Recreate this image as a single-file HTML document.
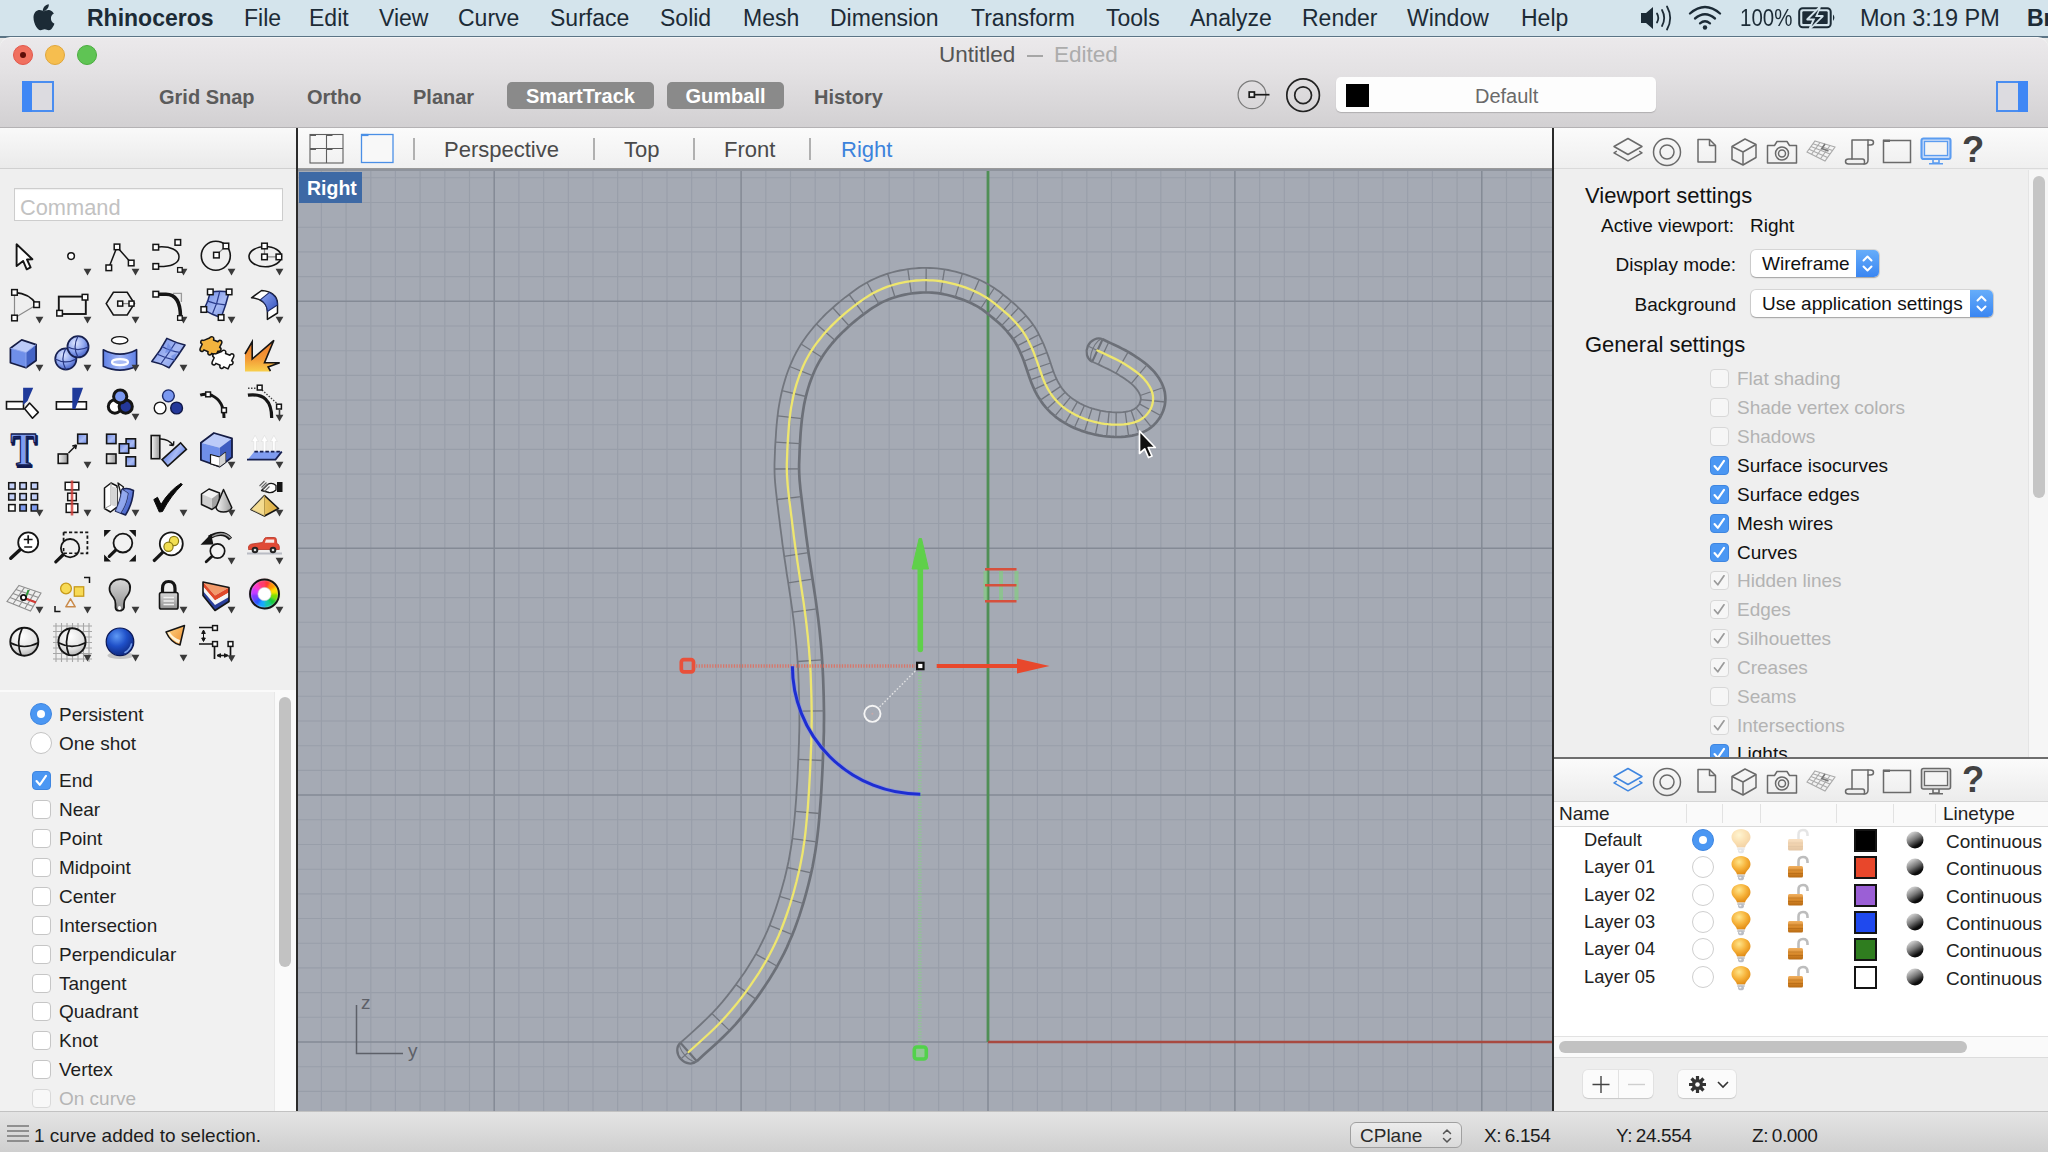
<!DOCTYPE html>
<html><head><meta charset="utf-8"><title>Rhinoceros</title>
<style>
*{box-sizing:border-box;margin:0;padding:0}
html,body{width:2048px;height:1152px;overflow:hidden;background:#e9e9e9;font-family:"Liberation Sans",sans-serif;color:#222}
.a{position:absolute}
.t{position:absolute;white-space:nowrap;line-height:1;font-size:19px;color:#1e1e1e}
.m{font-size:23px;color:#1c2b36;top:7px}
.b{font-weight:bold}
svg{position:absolute;overflow:visible}
#menubar{left:0;top:0;width:2048px;height:37px;background:#d4e4ec}
#win{left:0;top:36px;width:2048px;height:1116px;background:#ececec;border-radius:9px 9px 0 0;overflow:hidden}
#tb{left:0;top:0;width:2048px;height:92px;background:linear-gradient(#e9e7e9 0%,#e3e1e3 40%,#d3d1d3 100%);border-bottom:1px solid #b9b7b9}
.tbt{font-size:20px;font-weight:bold;color:#5b5b5b;top:86.500px}
.pill{position:absolute;top:82px;height:27px;border-radius:5px;background:#8a8a8a;color:#fff;font-size:20px;font-weight:bold;line-height:29px;text-align:center}
</style></head><body>
<div id="menubar" class="a">
<svg style="left:28.500px;top:2.500px" width="27.600" height="29.900" viewBox="0 0 24 26"><path fill="#1c2b36" d="M17.2 1c.2 1.6-.5 3.100-1.400 4.200-.9 1.100-2.400 2-3.800 1.900-.2-1.500.6-3.100 1.400-4.100C14.300 1.900 15.900 1.100 17.200 1zM21.600 9.200c-.3.200-2.500 1.500-2.500 4.300 0 3.300 2.900 4.400 3 4.500 0 .1-.5 1.600-1.500 3.100-.9 1.400-1.900 2.700-3.400 2.700-1.500 0-1.900-.9-3.600-.9-1.700 0-2.200.9-3.600.9-1.500 0-2.500-1.300-3.600-2.900C5 18.900 3.900 15.600 3.900 12.500c0-4.200 2.800-6.400 5.400-6.400 1.500 0 2.700 1 3.600 1 .9 0 2.300-1 4-1 .6 0 3 .1 4.700 3.100z"/></svg>
<div class="t m b" style="left:87px">Rhinoceros</div>
<div class="t m" style="left:244px">File</div>
<div class="t m" style="left:309px">Edit</div>
<div class="t m" style="left:379px">View</div>
<div class="t m" style="left:458px">Curve</div>
<div class="t m" style="left:550px">Surface</div>
<div class="t m" style="left:660px">Solid</div>
<div class="t m" style="left:743px">Mesh</div>
<div class="t m" style="left:830px">Dimension</div>
<div class="t m" style="left:971px">Transform</div>
<div class="t m" style="left:1106px">Tools</div>
<div class="t m" style="left:1190px">Analyze</div>
<div class="t m" style="left:1302px">Render</div>
<div class="t m" style="left:1407px">Window</div>
<div class="t m" style="left:1521px">Help</div>
<!-- volume -->
<svg style="left:1640px;top:4px" width="36" height="28" viewBox="0 0 36 28"><path fill="#1c2b36" d="M1 9h5l7-6v22l-7-6H1z"/><g fill="none" stroke="#1c2b36" stroke-width="1.800" stroke-linecap="round"><path d="M17 9.500q2.600 4.500 0 9"/><path d="M22 6q4.400 8 0 16"/><path d="M27 2.500q6.400 11.500 0 23"/></g></svg>
<!-- wifi -->
<svg style="left:1688px;top:5px" width="34" height="26" viewBox="0 0 34 26"><g fill="none" stroke="#1c2b36" stroke-width="2.300" stroke-linecap="round"><path d="M2 8.500q15-13 30 0"/><path d="M7 13.500q10-8.500 20 0"/><path d="M12 18.300q5-4 10 0"/></g><circle cx="17" cy="22.500" r="2.200" fill="#1c2b36"/></svg>
<div class="t m" style="left:1740px;transform:scaleX(.89);transform-origin:left">100%</div>
<!-- battery -->
<svg style="left:1798px;top:7px" width="40" height="22" viewBox="0 0 40 22"><rect x="1.200" y="1.200" width="31.500" height="19" rx="3.500" fill="none" stroke="#1c2b36" stroke-width="2"/><rect x="4.300" y="4.300" width="25.400" height="12.800" rx="1.200" fill="#1c2b36"/><path d="M35 7.500q2.800 3.200 0 6.500z" fill="#1c2b36"/><path d="M21.500 .5L9.500 12.300h6.500L12 21.500 24.500 9.200h-6.500z" fill="#d4e4ec" stroke="#d4e4ec" stroke-width="2.400" stroke-linejoin="round"/><path d="M20.500 2.500L11.500 11.600h5.800L13.500 19.500 22.800 10h-5.800z" fill="#1c2b36"/></svg>
<div class="t m" style="left:1860px;font-size:23.500px">Mon 3:19 PM</div>
<div class="t m b" style="left:2027px">Br</div>
</div>
<div class="a" style="left:0;top:36px;width:2048px;height:2px;background:#5b7485"></div>
<div class="a" style="left:0;top:37px;width:2048px;height:91px;background:linear-gradient(#ebe9eb 0%,#e4e2e4 35%,#d2d0d2 100%);border-radius:10px 10px 0 0;border-top:1px solid #f6f6f6"></div>
<div class="a" style="left:0;top:127px;width:2048px;height:1px;background:#b4b2b4"></div>
<!-- traffic lights -->
<div class="a" style="left:12.500px;top:44.500px;width:20px;height:20px;border-radius:50%;background:#f0705f;border:1px solid #e2574b"></div>
<div class="a" style="left:19.500px;top:51.500px;width:6px;height:6px;border-radius:50%;background:#5e0d08"></div>
<div class="a" style="left:44.500px;top:44.500px;width:20px;height:20px;border-radius:50%;background:#f6be4f;border:1px solid #e0a63a"></div>
<div class="a" style="left:76.500px;top:44.500px;width:20px;height:20px;border-radius:50%;background:#5fc454;border:1px solid #4aad3f"></div>
<!-- title -->
<div class="t" style="left:939px;top:44px;font-size:22.500px;color:#555">Untitled</div>
<div class="a" style="left:1027px;top:55px;width:16px;height:1.500px;background:#a6a6a6"></div>
<div class="t" style="left:1054px;top:44px;font-size:22.500px;color:#acacac">Edited</div>
<!-- left sidebar toggle -->
<div class="a" style="left:22px;top:81px;width:32px;height:31px;border:2px solid #4a8df0;background:#dcdbe0"></div>
<div class="a" style="left:22px;top:81px;width:10px;height:31px;background:#3f87f5"></div>
<div class="t tbt" style="left:159px">Grid Snap</div>
<div class="t tbt" style="left:307px">Ortho</div>
<div class="t tbt" style="left:413px">Planar</div>
<div class="pill" style="left:507px;width:147px">SmartTrack</div>
<div class="pill" style="left:667px;width:117px">Gumball</div>
<div class="t tbt" style="left:814px">History</div>
<!-- record / concentric icons -->
<svg style="left:1232px;top:75px" width="44" height="40" viewBox="0 0 44 40"><circle cx="20" cy="19.800" r="13.900" fill="none" stroke="#7a7a7a" stroke-width="1.200"/><rect x="17.200" y="17" width="5.200" height="5.200" fill="#eee" stroke="#1a1a1a" stroke-width="1.700"/><path d="M22.500 19.700h15" stroke="#1a1a1a" stroke-width="1.700"/></svg>
<svg style="left:1283px;top:75px" width="40" height="40" viewBox="0 0 40 40"><circle cx="20.100" cy="20.200" r="16.300" fill="none" stroke="#222" stroke-width="1.700"/><circle cx="20.100" cy="20.200" r="8.400" fill="none" stroke="#222" stroke-width="1.700"/></svg>
<!-- layer field -->
<div class="a" style="left:1336px;top:77px;width:320px;height:35px;background:#fdfdfd;border-radius:5px;box-shadow:0 1px 1px rgba(0,0,0,.18)"></div>
<div class="a" style="left:1346px;top:84px;width:23px;height:23px;background:#000"></div>
<div class="t" style="left:1475px;top:86px;font-size:20px;color:#6a6a6a">Default</div>
<!-- right sidebar toggle -->
<div class="a" style="left:1996px;top:81px;width:32px;height:31px;border:2px solid #4a8df0;background:#dcdbe0"></div>
<div class="a" style="left:2018px;top:81px;width:10px;height:31px;background:#3f87f5"></div>
<!-- LEFT PANEL -->
<div class="a" style="left:0;top:128px;width:297px;height:984px;background:#efefef"></div>
<div class="a" style="left:0;top:128px;width:297px;height:41px;background:linear-gradient(#f9f9f9,#eaeaea);border-bottom:1px solid #d0d0d0"></div>
<div class="a" style="left:296px;top:128px;width:2px;height:984px;background:#2b2b2b"></div>
<div class="a" style="left:14px;top:188px;width:269px;height:33px;background:#fff;border:1px solid #cdcdcd;box-shadow:inset 0 1px 1px rgba(0,0,0,.06)"></div>
<div class="t" style="left:20px;top:196.500px;font-size:21.800px;color:#c2c2c2">Command</div>
<div class="a" style="left:0;top:690px;width:296px;height:2px;background:#fafafa"></div>
<div class="a" style="left:0;top:692px;width:274px;height:420px;background:#f1f1f1"></div>
<div class="a" style="left:274px;top:692px;width:22px;height:420px;background:#fafafa;border-left:1px solid #e8e8e8"></div>
<div class="a" style="left:279px;top:697px;width:12px;height:270px;background:#c2c2c2;border-radius:6px"></div>
<div class="a" style="left:30px;top:703px;width:22px;height:22px;border-radius:50%;background:#4b97f3;border:1px solid #3f86e0"></div>
<div class="a" style="left:37px;top:710px;width:8px;height:8px;border-radius:50%;background:#fff"></div>
<div class="a" style="left:30px;top:732px;width:22px;height:22px;border-radius:50%;background:#fff;border:1px solid #c4c4c4"></div>
<div class="t" style="left:59px;top:705px">Persistent</div>
<div class="t" style="left:59px;top:734px">One shot</div>
<div class="a" style="left:32px;top:771px;width:19px;height:19px;border-radius:4px;background:#4b97f3;border:1px solid #3f86e0"></div>
<svg style="left:32px;top:771px" width="19" height="19" viewBox="0 0 19 19"><path d="M4.500 10l3.300 3.800L14 4.800" fill="none" stroke="#fff" stroke-width="2.100" stroke-linecap="round" stroke-linejoin="round"/></svg>
<div class="t" style="left:59px;top:771px">End</div>
<div class="a" style="left:32px;top:800px;width:19px;height:19px;border-radius:4px;background:#fff;border:1px solid #c6c6c6"></div>
<div class="t" style="left:59px;top:800px">Near</div>
<div class="a" style="left:32px;top:829px;width:19px;height:19px;border-radius:4px;background:#fff;border:1px solid #c6c6c6"></div>
<div class="t" style="left:59px;top:829px">Point</div>
<div class="a" style="left:32px;top:858px;width:19px;height:19px;border-radius:4px;background:#fff;border:1px solid #c6c6c6"></div>
<div class="t" style="left:59px;top:858px">Midpoint</div>
<div class="a" style="left:32px;top:887px;width:19px;height:19px;border-radius:4px;background:#fff;border:1px solid #c6c6c6"></div>
<div class="t" style="left:59px;top:887px">Center</div>
<div class="a" style="left:32px;top:916px;width:19px;height:19px;border-radius:4px;background:#fff;border:1px solid #c6c6c6"></div>
<div class="t" style="left:59px;top:916px">Intersection</div>
<div class="a" style="left:32px;top:945px;width:19px;height:19px;border-radius:4px;background:#fff;border:1px solid #c6c6c6"></div>
<div class="t" style="left:59px;top:945px">Perpendicular</div>
<div class="a" style="left:32px;top:974px;width:19px;height:19px;border-radius:4px;background:#fff;border:1px solid #c6c6c6"></div>
<div class="t" style="left:59px;top:974px">Tangent</div>
<div class="a" style="left:32px;top:1002px;width:19px;height:19px;border-radius:4px;background:#fff;border:1px solid #c6c6c6"></div>
<div class="t" style="left:59px;top:1002px">Quadrant</div>
<div class="a" style="left:32px;top:1031px;width:19px;height:19px;border-radius:4px;background:#fff;border:1px solid #c6c6c6"></div>
<div class="t" style="left:59px;top:1031px">Knot</div>
<div class="a" style="left:32px;top:1060px;width:19px;height:19px;border-radius:4px;background:#fff;border:1px solid #c6c6c6"></div>
<div class="t" style="left:59px;top:1060px">Vertex</div>
<div class="a" style="left:32px;top:1089px;width:19px;height:19px;border-radius:4px;background:#fff;border:1px solid #c6c6c6;opacity:.55"></div>
<div class="t" style="left:59px;top:1089px;color:#b5b5b5">On curve</div>
<!-- TOOL ICONS -->
<svg style="left:0;top:0" width="296" height="690" viewBox="0 0 296 690">
<defs>
<linearGradient id="gBlueQ" x1="0" y1="0" x2="1" y2="1"><stop offset="0" stop-color="#6d8ae6"/><stop offset=".55" stop-color="#a9bbf4"/><stop offset="1" stop-color="#6f8de6"/></linearGradient>
<linearGradient id="gBlueB" x1="0" y1="0" x2="1" y2="1"><stop offset="0" stop-color="#8fa6f0"/><stop offset="1" stop-color="#3553c0"/></linearGradient>
<linearGradient id="gBlueC" x1="0" y1="0" x2="1" y2="0"><stop offset="0" stop-color="#5f80e6"/><stop offset=".5" stop-color="#9fb4f4"/><stop offset="1" stop-color="#5f80e6"/></linearGradient>
<radialGradient id="gSphB" cx=".38" cy=".32" r=".75"><stop offset="0" stop-color="#dfe7ff"/><stop offset=".55" stop-color="#8ea6f0"/><stop offset="1" stop-color="#3c58c0"/></radialGradient>
<linearGradient id="gExpl" x1="0" y1="0" x2="0" y2="1"><stop offset="0" stop-color="#ee7a2c"/><stop offset=".6" stop-color="#f39a36"/><stop offset="1" stop-color="#f8cf4c"/></linearGradient>
<radialGradient id="gSphW" cx=".42" cy=".3" r=".8"><stop offset="0" stop-color="#ffffff"/><stop offset=".6" stop-color="#e2e2e2"/><stop offset="1" stop-color="#a8a8a8"/></radialGradient>
<radialGradient id="gSphN" cx=".38" cy=".3" r=".8"><stop offset="0" stop-color="#5f9af5"/><stop offset=".45" stop-color="#1f50c8"/><stop offset="1" stop-color="#0a1f70"/></radialGradient>
<linearGradient id="gGray" x1="0" y1="0" x2="0" y2="1"><stop offset="0" stop-color="#d8d8d8"/><stop offset="1" stop-color="#8e8e8e"/></linearGradient>
<linearGradient id="gGrayH" x1="0" y1="0" x2="1" y2="0"><stop offset="0" stop-color="#f4f4f4"/><stop offset="1" stop-color="#9a9a9a"/></linearGradient>
<linearGradient id="gYel" x1="0" y1="0" x2="1" y2="0"><stop offset="0" stop-color="#f7dc86"/><stop offset="1" stop-color="#d9a93e"/></linearGradient>
<linearGradient id="gCone" x1="0" y1="0" x2="1" y2="1"><stop offset="0" stop-color="#ffd98a"/><stop offset="1" stop-color="#ee8a2a"/></linearGradient>
<filter id="blur1" x="-10%" y="-10%" width="120%" height="120%"><feGaussianBlur stdDeviation="1.2"/></filter>
</defs>
<g transform="translate(0 233)"><path d="M16.600 11.300V33l6.500-5.100 3.600 8.400 3.900-1.900-3.600-7.900 5.400-.3z" fill="#fff" stroke="#151515" stroke-width="1.900" stroke-linejoin="round"/></g>
<g transform="translate(48 233)"><circle cx="23.100" cy="23.100" r="3.300" fill="#fff" stroke="#151515" stroke-width="1.500"/><path d="M35.600 35.800h7.800l-3.900 6.700z" fill="#3a3a3a"/></g>
<g transform="translate(96 233)"><path d="M12.800 34.800L21 13.900L35.200 30" fill="none" stroke="#151515" stroke-width="1.500"/><rect x="10.0" y="32.0" width="5.6" height="5.6" fill="#fff" stroke="#151515" stroke-width="1.5"/><rect x="18.2" y="11.1" width="5.6" height="5.6" fill="#fff" stroke="#151515" stroke-width="1.5"/><rect x="32.4" y="27.2" width="5.6" height="5.6" fill="#fff" stroke="#151515" stroke-width="1.5"/><path d="M35.600 35.800h7.800l-3.900 6.700z" fill="#3a3a3a"/></g>
<g transform="translate(144 233)"><path d="M11.800 14.200C27 12.500 35 17.500 35 24C35 30.500 27 34.200 11.800 33.400" fill="none" stroke="#151515" stroke-width="1.500"/><rect x="9.0" y="11.4" width="5.6" height="5.6" fill="#fff" stroke="#151515" stroke-width="1.5"/><rect x="31.0" y="6.6" width="5.6" height="5.6" fill="#fff" stroke="#151515" stroke-width="1.5"/><rect x="9.0" y="30.6" width="5.6" height="5.6" fill="#fff" stroke="#151515" stroke-width="1.5"/><path d="M35.600 35.800h7.800l-3.900 6.700z" fill="#3a3a3a"/><rect x="33.6" y="34.6" width="4.6" height="4.6" fill="#fff" stroke="#151515" stroke-width="1.3"/></g>
<g transform="translate(192 233)"><circle cx="23.800" cy="22.800" r="14.500" fill="none" stroke="#151515" stroke-width="1.600"/><path d="M24.400 22.100L33.900 13" stroke="#888" stroke-width="1.200"/><rect x="21.6" y="19.3" width="5.6" height="5.6" fill="#fff" stroke="#151515" stroke-width="1.5"/><rect x="31.1" y="10.2" width="5.6" height="5.6" fill="#fff" stroke="#151515" stroke-width="1.5"/><path d="M35.600 35.800h7.800l-3.900 6.700z" fill="#3a3a3a"/></g>
<g transform="translate(240 233)"><ellipse cx="25.200" cy="23.600" rx="16.200" ry="10.100" fill="none" stroke="#151515" stroke-width="1.600"/><path d="M24.500 13V23.900H38.900" fill="none" stroke="#888" stroke-width="1.200"/><rect x="21.7" y="10.2" width="5.6" height="5.6" fill="#fff" stroke="#151515" stroke-width="1.5"/><rect x="21.7" y="21.1" width="5.6" height="5.6" fill="#fff" stroke="#151515" stroke-width="1.5"/><rect x="36.1" y="21.1" width="5.6" height="5.6" fill="#fff" stroke="#151515" stroke-width="1.5"/><path d="M35.600 35.800h7.800l-3.900 6.700z" fill="#3a3a3a"/></g>
<g transform="translate(0 281)"><path d="M14.500 11.400V37L36.600 23.700" fill="none" stroke="#8a8a8a" stroke-width="1.200"/><path d="M14.500 11.400Q30 12.500 36.600 23.700" fill="none" stroke="#151515" stroke-width="1.600"/><rect x="11.7" y="8.6" width="5.6" height="5.6" fill="#fff" stroke="#151515" stroke-width="1.5"/><rect x="33.8" y="20.9" width="5.6" height="5.6" fill="#fff" stroke="#151515" stroke-width="1.5"/><rect x="11.7" y="34.2" width="5.6" height="5.6" fill="#fff" stroke="#151515" stroke-width="1.5"/><path d="M35.600 35.800h7.800l-3.900 6.700z" fill="#3a3a3a"/></g>
<g transform="translate(48 281)"><rect x="10.800" y="15.600" width="27" height="17.400" fill="none" stroke="#151515" stroke-width="1.900"/><rect x="34.2" y="13.4" width="5.6" height="5.6" fill="#fff" stroke="#151515" stroke-width="1.5"/><rect x="8.8" y="29.4" width="5.6" height="5.6" fill="#fff" stroke="#151515" stroke-width="1.5"/><path d="M35.600 35.800h7.800l-3.900 6.700z" fill="#3a3a3a"/></g>
<g transform="translate(96 281)"><path d="M10.200 22.600L17.400 11.300H31.200L38.400 22.600 31.200 34H17.400z" fill="none" stroke="#151515" stroke-width="1.600"/><path d="M24.200 22.600H35.500" stroke="#888" stroke-width="1.200"/><rect x="21.7" y="20.1" width="5" height="5" fill="#fff" stroke="#151515" stroke-width="1.5"/><rect x="33.0" y="20.1" width="5" height="5" fill="#fff" stroke="#151515" stroke-width="1.5"/><path d="M35.600 35.800h7.800l-3.900 6.700z" fill="#3a3a3a"/></g>
<g transform="translate(144 281)"><path d="M29 12.400H37.400V21" fill="none" stroke="#9a9a9a" stroke-width="1.300"/><path d="M11.800 13.200H22Q36.500 13.200 36.500 36" fill="none" stroke="#151515" stroke-width="3.600"/><rect x="9.0" y="10.4" width="5.6" height="5.6" fill="#fff" stroke="#151515" stroke-width="1.5"/><path d="M35.600 35.800h7.800l-3.900 6.700z" fill="#3a3a3a"/><rect x="33.6" y="34.7" width="4.6" height="4.6" fill="#fff" stroke="#151515" stroke-width="1.3"/></g>
<g transform="translate(192 281)"><path d="M18.300 11.200Q28 9.500 37.100 11.200Q34 24 29.100 36.800Q19 33 11.800 28.800Q16.500 20 18.300 11.200z" fill="url(#gBlueQ)" stroke="#1c2a6a" stroke-width="1.500"/><path d="M27.700 10.500Q25.500 22 20.500 32.800M14.800 19.800Q24 23.500 33.400 23.800" fill="none" stroke="#2b3c8c" stroke-width="1.300"/><rect x="15.5" y="8.1" width="5.6" height="5.6" fill="#fff" stroke="#151515" stroke-width="1.5"/><rect x="34.3" y="8.1" width="5.6" height="5.6" fill="#fff" stroke="#151515" stroke-width="1.5"/><rect x="9.0" y="25.7" width="5.6" height="5.6" fill="#fff" stroke="#151515" stroke-width="1.5"/><rect x="26.3" y="33.7" width="5.6" height="5.6" fill="#fff" stroke="#151515" stroke-width="1.5"/><path d="M35.600 35.800h7.800l-3.900 6.700z" fill="#3a3a3a"/></g>
<g transform="translate(240 281)"><path d="M11.500 16.800L21.600 9.500C30 10 37.500 14 37.500 23V32L27.400 38.400V30C27.400 22 20 17.500 11.500 16.800z" fill="#fff" stroke="#151515" stroke-width="1.500" stroke-linejoin="round"/><path d="M20.500 18.600L29.500 11.400C34.500 13.500 37.200 17.500 37.500 24L27.400 30.500C27 25 24.500 21 20.500 18.600z" fill="url(#gBlueB)" stroke="#1c2a6a" stroke-width="1.100"/><path d="M35.600 35.800h7.800l-3.900 6.700z" fill="#3a3a3a"/></g>
<g transform="translate(0 329)"><path d="M10.400 19.200L21.700 10.900 36.100 15.600 26 23.600z" fill="#bccbf8"/><path d="M10.400 19.200L26 23.600V38.700L10.400 33.700z" fill="#6f8fe9"/><path d="M26 23.600L36.100 15.600V31.500L26 38.700z" fill="#4464c6"/><path d="M10.400 19.200L21.700 10.900 36.100 15.600V31.500L26 38.700 10.400 33.700z" fill="none" stroke="#151c44" stroke-width="1.700" stroke-linejoin="round"/><path d="M10.400 19.200L26 23.600 36.100 15.600M26 23.600V38.700" fill="none" stroke="#8fa6ee" stroke-width=".9"/><path d="M35.600 35.800h7.800l-3.900 6.700z" fill="#3a3a3a"/></g>
<g transform="translate(48 329)"><circle cx="17.8" cy="30" r="10.6" fill="url(#gSphB)" stroke="#17204f" stroke-width="1.700"/><path d="M7.200000000000001 30Q17.8 35.8 28.4 30M17.8 19.4Q12.0 30 17.8 40.6" fill="none" stroke="#2a3a86" stroke-width="1.200"/><circle cx="30" cy="17.8" r="10.6" fill="url(#gSphB)" stroke="#17204f" stroke-width="1.700"/><path d="M19.4 17.8Q30 23.6 40.6 17.8M30 7.200000000000001Q24.2 17.8 30 28.4" fill="none" stroke="#2a3a86" stroke-width="1.200"/><path d="M35.600 35.800h7.800l-3.900 6.700z" fill="#3a3a3a"/></g>
<g transform="translate(96 329)"><ellipse cx="23.700" cy="11.300" rx="8.200" ry="3.700" fill="#fff" stroke="#151515" stroke-width="1.400"/><path d="M7.300 20.700Q24 29.500 40.600 20.700V37.300Q24 45 7.300 37.300z" fill="url(#gBlueC)" stroke="#17204f" stroke-width="1.600" stroke-linejoin="round"/><ellipse cx="24" cy="33.200" rx="8" ry="3" fill="#a9bcf5" stroke="#fff" stroke-width="2.200"/><path d="M35.600 35.800h7.800l-3.900 6.700z" fill="#3a3a3a"/></g>
<g transform="translate(144 329)"><path d="M22.900 9.400Q32 14 41 16Q34 27 25.100 38.700Q16 34 7.800 32.500Q17 21 22.900 9.400z" fill="url(#gBlueQ)" stroke="#17204f" stroke-width="1.600" stroke-linejoin="round"/><path d="M32 12.800Q25 24 16.500 35.300M17.500 17.200Q26 22 36.500 23.500M12.800 25Q21 29 31 31.200" fill="none" stroke="#2b3c8c" stroke-width="1.200"/><path d="M24 14l6 8-9 2zM27 27l6-3-3 8z" fill="#5f7fe0" opacity=".55"/><path d="M35.600 35.800h7.800l-3.900 6.700z" fill="#3a3a3a"/></g>
<g transform="translate(192 329)"><path d="M14 10.500c1.500-2.500 5.500-1 4 2l4.500 1.800c1-2.800 5-1.200 3.600 1.600l-2 3.900c2.600 1.200 1.400 4.800-1.600 3.800l-2 4.300-4.200-2c-1.300 2.800-5 1.200-3.700-1.600L8.400 22.400c-1 2.800-4.800 1.300-3.700-1.500l2-4.200c-2.700-1.400-1.300-5 1.600-3.800z" fill="#f3b43e" stroke="#151515" stroke-width="1.500" stroke-linejoin="round" transform="translate(3.500 -1.500)"/><path d="M14 10.500c1.500-2.500 5.500-1 4 2l4.500 1.800c1-2.800 5-1.200 3.600 1.600l-2 3.900c2.600 1.200 1.400 4.800-1.600 3.800l-2 4.300-4.200-2c-1.300 2.800-5 1.200-3.700-1.600L8.400 22.400c-1 2.800-4.800 1.300-3.700-1.500l2-4.200c-2.700-1.400-1.300-5 1.600-3.800z" fill="#fff" stroke="#151515" stroke-width="1.500" stroke-linejoin="round" transform="translate(15.500 12)"/></g>
<g transform="translate(240 329)"><path d="M5 42.400V25L12.200 12.700V30.100L33.900 11.300 24.500 33.700H39.700L28.100 38 30.500 42.400z" fill="url(#gExpl)"/><path d="M5 25L12.200 12.700V30.100L33.900 11.300 24.500 33.700H39.700L28.100 38 30.500 42" fill="none" stroke="#151515" stroke-width="1.600" stroke-linejoin="miter"/></g>
<g transform="translate(0 378)"><rect x="6.500" y="23.600" width="17" height="7.400" fill="#fff" stroke="#151515" stroke-width="1.600"/><path d="M24.600 30.800L29.600 25 38.300 34.400 32.500 40.200z" fill="#fff" stroke="#151515" stroke-width="1.600" stroke-linejoin="round"/><path d="M23.100 9.800H33.200L27.500 23 23.100 27z" fill="#1f3a9a"/></g>
<g transform="translate(48 378)"><rect x="8.400" y="23.800" width="30" height="7.400" fill="#fff" stroke="#151515" stroke-width="1.600"/><path d="M24.300 9.800H35.100L27.300 31H24.300z" fill="#1f3a9a"/></g>
<g transform="translate(96 378)"><circle cx="18.900" cy="28.600" r="6.600" fill="#fff" stroke="#151515" stroke-width="3"/><circle cx="29.700" cy="28.600" r="6.600" fill="#24389a" stroke="#151515" stroke-width="3"/><circle cx="24.200" cy="18.500" r="6.600" fill="#7a98f0" stroke="#151515" stroke-width="3"/><path d="M35.600 35.800h7.800l-3.900 6.700z" fill="#3a3a3a"/></g>
<g transform="translate(144 378)"><circle cx="24.400" cy="17.800" r="5.900" fill="#7a98f0" stroke="#1a2868" stroke-width="1.400"/><circle cx="16.100" cy="30" r="5.900" fill="#fff" stroke="#151515" stroke-width="1.400"/><circle cx="32.600" cy="30" r="5.900" fill="#24389a" stroke="#101848" stroke-width="1.400"/></g>
<g transform="translate(192 378)"><path d="M8.200 17.200Q14 15 20 17.500Q32 23 32 40" fill="none" stroke="#151515" stroke-width="3" stroke-linecap="butt"/><rect x="13.7" y="14.0" width="4.8" height="4.8" fill="#fff" stroke="#151515" stroke-width="1.5"/><rect x="29.6" y="29.8" width="4.8" height="4.8" fill="#fff" stroke="#151515" stroke-width="1.5"/></g>
<g transform="translate(240 378)"><path d="M8 10.200H17M22 12L37.500 26" fill="none" stroke="#444" stroke-width="1.400" stroke-dasharray="1.500 1.500"/><path d="M7.900 17.200Q31.700 14 31.700 40" fill="none" stroke="#151515" stroke-width="3.200"/><rect x="17.3" y="7.2" width="4.8" height="4.8" fill="#fff" stroke="#151515" stroke-width="1.5"/><rect x="36.6" y="26.2" width="4.8" height="4.8" fill="#fff" stroke="#151515" stroke-width="1.5"/><path d="M35.600 36.800h7.800l-3.900 6.700z" fill="#3a3a3a"/><path d="M39.500 32v5" stroke="#3a3a3a" stroke-width="1.600"/></g>
<g transform="translate(0 426)"><g transform="translate(24 0) scale(.84 1) translate(-24 0)"><text x="24.800" y="40.500" text-anchor="middle" font-family="Liberation Serif, serif" font-weight="bold" font-size="46" fill="#233a9e" stroke="#101a50" stroke-width="2.200" stroke-linejoin="round">T</text><text x="23.300" y="39" text-anchor="middle" font-family="Liberation Serif, serif" font-weight="bold" font-size="46" fill="#7f9cf0" stroke="#101a50" stroke-width="1.300" stroke-linejoin="round">T</text></g></g>
<g transform="translate(48 426)"><rect x="10.2" y="28.0" width="9.4" height="9.4" fill="url(#gGrayH)" stroke="#151515" stroke-width="1.600"/><rect x="29.7" y="8.2" width="9.4" height="9.4" fill="url(#gBlueQ)" stroke="#151515" stroke-width="1.600"/><path d="M20.500 27L28.500 19M28.500 19L24.300 20M28.500 19L27.500 23.200" fill="none" stroke="#151515" stroke-width="1.500"/><path d="M35.600 35.800h7.800l-3.900 6.700z" fill="#3a3a3a"/></g>
<g transform="translate(96 426)"><rect x="10.6" y="8.2" width="9.4" height="9.4" fill="url(#gBlueQ)" stroke="#151515" stroke-width="1.600"/><rect x="30.1" y="12.8" width="9.4" height="9.4" fill="url(#gBlueQ)" stroke="#151515" stroke-width="1.600"/><rect x="23.3" y="17.8" width="9.4" height="9.4" fill="url(#gBlueQ)" stroke="#151515" stroke-width="1.600"/><rect x="10.6" y="28.0" width="9.4" height="9.4" fill="url(#gGrayH)" stroke="#151515" stroke-width="1.600"/><rect x="30.1" y="30.8" width="9.4" height="9.4" fill="url(#gBlueQ)" stroke="#151515" stroke-width="1.600"/></g>
<g transform="translate(144 426)"><rect x="7.200" y="9.500" width="8.600" height="23.200" fill="url(#gGrayH)" stroke="#151515" stroke-width="1.600"/><g transform="translate(30.200 28.500) rotate(-42)"><rect x="-12.500" y="-4.300" width="25" height="8.600" fill="url(#gBlueQ)" stroke="#151515" stroke-width="1.600"/></g><path d="M16 13Q24 12.500 29.500 19.500M29.500 19.500L29.800 15.200M29.500 19.500L25.300 19" fill="none" stroke="#151515" stroke-width="1.400"/></g>
<g transform="translate(192 426)"><path d="M8.900 16.800L21.900 7 40 12.400 27.700 21.800z" fill="#bccbf8"/><path d="M8.900 16.800L27.700 21.800V40.600L8.900 34z" fill="#6f8fe9"/><path d="M27.700 21.800L40 12.400V31.200L27.700 40.600z" fill="#3e5cc0"/><path d="M8.900 16.800L21.900 7 40 12.400V31.200L27.700 40.600 8.900 34z" fill="none" stroke="#151c44" stroke-width="1.800" stroke-linejoin="round"/><path d="M18.500 28.500L27.700 31 33.500 26.500V36.300L27.700 40.600 18.500 37.800z" fill="#fff" stroke="#151515" stroke-width="1.200" stroke-linejoin="round"/><path d="M27.700 31V40.600" stroke="#999" stroke-width="1"/><path d="M27.700 31L33.500 26.500V36.300L27.700 40.600z" fill="#d4d4d4"/><path d="M35.600 35.800h7.800l-3.900 6.700z" fill="#3a3a3a"/></g>
<g transform="translate(240 426)"><path d="M13.799999999999999 26.500V15.500H11.7L15.1 9.300 18.5 15.500H16.4V26.500z" fill="#fff" stroke="#dcdcdc" stroke-width=".6"/><path d="M23.2 26.500V15.500H21.1L24.5 9.300 27.9 15.500H25.8V26.500z" fill="#fff" stroke="#dcdcdc" stroke-width=".6"/><path d="M32.6 26.500V15.500H30.5L33.9 9.300 37.3 15.500H35.199999999999996V26.500z" fill="#fff" stroke="#dcdcdc" stroke-width=".6"/><path d="M7.900 33.400L14.400 25.400H41.800L35.300 33.400z" fill="#7f9cf0"/><path d="M14.400 25.600H41.800" stroke="#17204f" stroke-width="1.600" stroke-dasharray="3.500 2"/><path d="M7 33.600H35.500L41.800 25.600" fill="none" stroke="#17204f" stroke-width="1.700"/><path d="M35.600 35.800h7.800l-3.900 6.700z" fill="#3a3a3a"/></g>
<g transform="translate(0 474)"><rect x="8.7" y="8.7" width="6.400" height="6.400" fill="#c3d0f8" stroke="#151515" stroke-width="1.500"/><rect x="19.9" y="8.7" width="6.400" height="6.400" fill="#c3d0f8" stroke="#151515" stroke-width="1.500"/><rect x="31.2" y="8.7" width="6.400" height="6.400" fill="#c3d0f8" stroke="#151515" stroke-width="1.500"/><rect x="8.7" y="19.6" width="6.400" height="6.400" fill="#c3d0f8" stroke="#151515" stroke-width="1.500"/><rect x="19.9" y="19.6" width="6.400" height="6.400" fill="#c3d0f8" stroke="#151515" stroke-width="1.500"/><rect x="31.2" y="19.6" width="6.400" height="6.400" fill="#c3d0f8" stroke="#151515" stroke-width="1.500"/><rect x="8.7" y="30.6" width="6.400" height="6.400" fill="#fff" stroke="#151515" stroke-width="1.500"/><rect x="19.9" y="30.6" width="6.400" height="6.400" fill="#7f9cf0" stroke="#151515" stroke-width="1.500"/><rect x="31.2" y="30.6" width="6.400" height="6.400" fill="#7f9cf0" stroke="#151515" stroke-width="1.500"/><path d="M35.600 35.800h7.800l-3.900 6.700z" fill="#3a3a3a"/></g>
<g transform="translate(48 474)"><rect x="17.200" y="8.300" width="13.600" height="7.600" fill="#fff" stroke="#151515" stroke-width="1.500"/><rect x="19.700" y="19.200" width="8.600" height="7.400" fill="#fff" stroke="#151515" stroke-width="1.500"/><rect x="18.200" y="29.800" width="11.600" height="8.600" fill="#fff" stroke="#151515" stroke-width="1.500"/><path d="M24 6.500V41.500" stroke="#d23a34" stroke-width="2.600" opacity=".8"/><path d="M35.600 35.800h7.800l-3.900 6.700z" fill="#3a3a3a"/></g>
<g transform="translate(96 474)"><path d="M8.500 14L15 9 21 12V33L14.500 38 8.500 34.500z" fill="#fff" stroke="#151515" stroke-width="1.500" stroke-linejoin="round"/><path d="M15 9V31L8.500 34.500" fill="none" stroke="#999" stroke-width="1"/><path d="M15 12L21 14V33L15 31z" fill="#d6d6d6"/><path d="M22 9L27.500 13 25 20z" fill="#fff" stroke="#151515" stroke-width="1.300" stroke-linejoin="round"/><path d="M26 15.500Q31 13 37.500 16.500Q36.500 30 29.500 41L19.500 37Q24.500 27 26 15.500z" fill="url(#gBlueB)" stroke="#17204f" stroke-width="1.600" stroke-linejoin="round"/><path d="M26 15.500Q30 17.500 32 19.500Q30.500 31 24.500 39" fill="none" stroke="#17204f" stroke-width="1.100"/><path d="M26 15.500Q30 17.500 32 19.500Q30.500 31 24.500 39L19.500 37Q24.500 27 26 15.500z" fill="#9fb4f4" opacity=".75"/><path d="M35.600 35.800h7.800l-3.900 6.700z" fill="#3a3a3a"/></g>
<g transform="translate(144 474)"><path d="M9.800 25.600L13.500 23.300 17 30.500Q25 17 37 9.300L38.300 10.600Q26.500 22 18.500 37.500L15.300 38z" fill="#0a0a0a" stroke="#0a0a0a" stroke-width="1" stroke-linejoin="round"/><path d="M35.600 35.800h7.800l-3.900 6.700z" fill="#3a3a3a"/></g>
<g transform="translate(192 474)"><path d="M9.500 20L17 15 27.500 19 20 24.500z" fill="#f2f2f2"/><path d="M9.500 20L20 24.500V35.500L9.500 30.500z" fill="#cfcfcf"/><path d="M20 24.500L27.500 19V30L20 35.500z" fill="#a2a2a2"/><path d="M9.500 20L17 15 27.500 19V30L20 35.500 9.500 30.500z" fill="none" stroke="#151515" stroke-width="1.500" stroke-linejoin="round"/><path d="M31.500 15.500L39.800 33.500Q38 38 31.500 38Q25 38 24 33.500z" fill="url(#gGrayH)" stroke="#151515" stroke-width="1.500" stroke-linejoin="round"/><path d="M35.600 35.800h7.800l-3.900 6.700z" fill="#3a3a3a"/></g>
<g transform="translate(240 474)"><path d="M24.500 21.500L11 35.500 24.500 42 38.500 34.500z" fill="url(#gYel)" stroke="#151515" stroke-width="1.600" stroke-linejoin="round"/><path d="M24.500 21.500V42" stroke="#8a6a1a" stroke-width="1"/><path d="M24.500 21.500L11 35.500 24.500 42z" fill="#f6e09a" opacity=".8"/><path d="M21.500 16.500L27.500 10.500Q32 8 36 11.500V16Q33 19 29 18.500z" fill="#fff" stroke="#151515" stroke-width="1.300" stroke-linejoin="round"/><path d="M21.500 13.500l5-5M23 15.500l5-5M24.500 17.500l5-5M19.500 12l5-5" stroke="#666" stroke-width="1.100"/><rect x="37" y="8" width="5.500" height="10" fill="#151515"/><path d="M35.600 35.800h7.800l-3.900 6.700z" fill="#3a3a3a"/></g>
<g transform="translate(0 522)"><path d="M20.8 27.1L10.8 36.3" stroke="#151515" stroke-width="3.4" stroke-linecap="round"/><circle cx="28.2" cy="20.4" r="10" fill="#fff" stroke="#151515" stroke-width="1.8"/><path d="M23.800 17.500H32.600M28.200 13.200V21.800M24.200 25H32.200" stroke="#151515" stroke-width="1.700" fill="none"/></g>
<g transform="translate(48 522)"><rect x="15.600" y="10.300" width="23.800" height="21" fill="none" stroke="#151515" stroke-width="1.800" stroke-dasharray="3.200 2.200"/><path d="M15.4 32.5L7.8 39.8" stroke="#151515" stroke-width="3.2" stroke-linecap="round"/><circle cx="22.1" cy="26.2" r="9.2" fill="#efefef" stroke="#151515" stroke-width="1.8"/><path d="M15.600 26V31.300H29" fill="none" stroke="#151515" stroke-width="1.600" stroke-dasharray="3.200 2.200"/></g>
<g transform="translate(96 522)"><path d="M8.100 8.100H15L8.100 15zM39.900 8.100V15L33 8.100zM8.100 39.500V32.500L15 39.500zM39.900 39.500H33L39.900 32.500z" fill="#151515"/><path d="M20.2 27.6L13.3 34.3" stroke="#151515" stroke-width="3.2" stroke-linecap="round"/><circle cx="26.9" cy="21.1" r="9.4" fill="#f2f2f2" stroke="#151515" stroke-width="1.8"/></g>
<g transform="translate(144 522)"><path d="M19.1 29.9L10.4 38.4" stroke="#151515" stroke-width="3.4" stroke-linecap="round"/><circle cx="27.3" cy="21.8" r="11.5" fill="#fff" stroke="#151515" stroke-width="1.8"/><circle cx="30" cy="19" r="4.600" fill="#f2df52" stroke="#8a7a14" stroke-width="1.200"/><circle cx="24.500" cy="24.800" r="4.600" fill="#f2df52" stroke="#8a7a14" stroke-width="1.200"/></g>
<g transform="translate(192 522)"><path d="M20.3 34.0L14.2 39.8" stroke="#151515" stroke-width="2.8" stroke-linecap="round"/><circle cx="25.5" cy="29" r="7.2" fill="#f2f2f2" stroke="#151515" stroke-width="1.7"/><path d="M38.500 17Q31 7.500 17 15.500" fill="none" stroke="#151515" stroke-width="4"/><path d="M38.500 16Q31 8.500 20 14.500" fill="none" stroke="#9a9a9a" stroke-width="1.400"/><path d="M8.500 22.800L19 12 21.500 22.500z" fill="#151515"/><path d="M35.600 35.800h7.800l-3.900 6.700z" fill="#3a3a3a"/></g>
<g transform="translate(240 522)"><path d="M7 31.500H42" stroke="#b9bcc4" stroke-width="2"/><path d="M8.500 26.500Q8 22.500 12 22L22.500 20.500 24.500 16.500Q25 15.500 26.500 15.500H34.500Q36 15.500 36.200 17L36.800 21.500Q39 22 39.300 24.500V27.500H8.500z" fill="#e04a36" stroke="#b83222" stroke-width=".8"/><path d="M26 17.500H34.200V20.800H24.800z" fill="#f6e9e6"/><circle cx="15" cy="28" r="3.300" fill="#222"/><circle cx="15" cy="28" r="1.300" fill="#ddd"/><circle cx="33" cy="28" r="3.300" fill="#222"/><circle cx="33" cy="28" r="1.300" fill="#ddd"/><path d="M35.600 35.800h7.800l-3.900 6.700z" fill="#3a3a3a"/></g>
<g transform="translate(0 571)"><g fill="none" stroke="#8f8f8f" stroke-width="1.100"><path d="M19 14.500L41 22 30.500 40 7 30.500z"/><path d="M24.500 16.400L13 33M30 18.300L19 35.500M35.500 20.100L24.800 37.700M16 18.500L38.500 26.500M13 22.500L36 31M10 26.500L33.300 35.500"/></g><path d="M28.500 19L25.500 27" stroke="#2e9a3a" stroke-width="2"/><path d="M25.500 27.500L36 31.500" stroke="#d23a34" stroke-width="2.200"/><circle cx="23.500" cy="26.500" r="2.600" fill="#fff" stroke="#151515" stroke-width="1.800"/><path d="M35.600 35.800h7.800l-3.900 6.700z" fill="#3a3a3a"/></g>
<g transform="translate(48 571)"><circle cx="18" cy="17.500" r="5.400" fill="#f7da55" stroke="#c79a1a" stroke-width="1.300"/><rect x="26.300" y="15.800" width="9.400" height="9.400" fill="#f7da55" stroke="#c79a1a" stroke-width="1.300"/><path d="M22.500 27.800L27.200 35.800H17.800z" fill="#f2f2f2" stroke="#c98a4a" stroke-width="1.500" stroke-linejoin="round"/><path d="M36 6.500H41.500V12M12.500 40.500H7V35" fill="none" stroke="#151515" stroke-width="1.500"/><path d="M35.600 35.800h7.800l-3.900 6.700z" fill="#3a3a3a"/></g>
<g transform="translate(96 571)"><path d="M24.500 8.200C17.500 8.200 13.500 12.500 13.500 18c0 3.800 2 6 4 8.500 1.300 1.700 1.900 3.500 2 6.500v3.500q.5 3 2.500 3h3.500q2-.5 2.500-3V33c.1-3 .7-4.800 2-6.500 2-2.500 4-4.700 4-8.500C35 12.500 31.500 8.200 24.500 8.200z" fill="url(#gGray)" stroke="#151515" stroke-width="1.800"/><ellipse cx="23.500" cy="37" rx="1.600" ry="2" fill="#fff"/><path d="M35.600 35.800h7.800l-3.900 6.700z" fill="#3a3a3a"/></g>
<g transform="translate(144 571)"><path d="M18.500 23V17.500Q18.500 10.500 24.700 10.500T31 17.500V23" fill="none" stroke="#151515" stroke-width="3.200"/><rect x="15.500" y="21.500" width="18.500" height="16.500" rx="1.800" fill="url(#gGray)" stroke="#151515" stroke-width="1.600"/><path d="M19.500 26.500H30M19.500 30H30M19.500 33.500H30" stroke="#efefef" stroke-width="1.400"/><path d="M35.600 35.800h7.800l-3.900 6.700z" fill="#3a3a3a"/></g>
<g transform="translate(192 571)"><path d="M11 11L37 16.500V30L23 39.500 11 24z" fill="#fff"/><path d="M11 11L37 16.500 23 24.500 11 11z" fill="#f29a6a"/><path d="M11 11V15.500L23 29.500 37 21.500V16.500L23 24.500z" fill="#e04a2a"/><path d="M11 15.500V20L23 34 37 26V21.500L23 29.500z" fill="#f4f4f4"/><path d="M11 20V24.500L23 39.500 37 30.500V26L23 34z" fill="#2a3f9a"/><path d="M11 11L37 16.500V30.500L23 39.500 11 24.500z" fill="none" stroke="#151515" stroke-width="1.600" stroke-linejoin="round"/><path d="M35.600 35.800h7.800l-3.900 6.700z" fill="#3a3a3a"/></g>
<g transform="translate(240 571)"><g filter="url(#blur1)"><path d="M24.500 23L24.07 8.81A14.2 14.2 0 0 1 31.97 10.92z" fill="#ff3b30"/><path d="M24.500 23L31.23 10.50A14.2 14.2 0 0 1 37.00 16.27z" fill="#ff9500"/><path d="M24.500 23L36.58 15.53A14.2 14.2 0 0 1 38.69 23.43z" fill="#ffe100"/><path d="M24.500 23L38.69 22.57A14.2 14.2 0 0 1 36.58 30.47z" fill="#7ee000"/><path d="M24.500 23L37.00 29.73A14.2 14.2 0 0 1 31.23 35.50z" fill="#19c93a"/><path d="M24.500 23L31.97 35.08A14.2 14.2 0 0 1 24.07 37.19z" fill="#12c9a8"/><path d="M24.500 23L24.93 37.19A14.2 14.2 0 0 1 17.03 35.08z" fill="#19a8ff"/><path d="M24.500 23L17.77 35.50A14.2 14.2 0 0 1 12.00 29.73z" fill="#2a55ff"/><path d="M24.500 23L12.42 30.47A14.2 14.2 0 0 1 10.31 22.57z" fill="#7b3bff"/><path d="M24.500 23L10.31 23.43A14.2 14.2 0 0 1 12.42 15.53z" fill="#c93bff"/><path d="M24.500 23L12.00 16.27A14.2 14.2 0 0 1 17.77 10.50z" fill="#ff3bc9"/><path d="M24.500 23L17.03 10.92A14.2 14.2 0 0 1 24.93 8.81z" fill="#ff3b6e"/></g><circle cx="24.500" cy="23" r="14.500" fill="none" stroke="#151515" stroke-width="1.900"/><circle cx="24.500" cy="23" r="6.600" fill="#fff" stroke="#d0d0d0" stroke-width=".6"/><path d="M35.600 35.800h7.800l-3.900 6.700z" fill="#3a3a3a"/></g>
<g transform="translate(0 619)"><circle cx="24.3" cy="22.8" r="14" fill="url(#gSphW)" stroke="#151515" stroke-width="1.900"/><path d="M10.3 23.8Q24.3 31.2 38.3 23.8M22.3 8.8Q15.6 22.8 21.3 36.8" fill="none" stroke="#151515" stroke-width="1.700"/></g>
<g transform="translate(48 619)"><path d="M8 4V43M13.5 4V43M19 4V43M24.5 4V43M30 4V43M35.5 4V43M41 4V43M5 7H44M5 12.5H44M5 18H44M5 23.5H44M5 29H44M5 34.5H44M5 40H44" stroke="#a6a6a6" stroke-width="1.100" fill="none"/><circle cx="24" cy="22.8" r="13.6" fill="url(#gSphW)" stroke="#151515" stroke-width="1.900"/><path d="M10.4 23.8Q24 31.0 37.6 23.8M22 9.200000000000001Q15.6 22.8 21 36.4" fill="none" stroke="#151515" stroke-width="1.700"/><path d="M35.600 35.800h7.800l-3.900 6.700z" fill="#3a3a3a"/></g>
<g transform="translate(96 619)"><ellipse cx="24.500" cy="36.500" rx="13" ry="3.500" fill="#000" opacity=".18"/><circle cx="24" cy="22.800" r="13.800" fill="url(#gSphN)" stroke="#0a1858" stroke-width="1.200"/><path d="M29 33.500Q34.500 30.500 35.500 25" fill="none" stroke="#8fb8ff" stroke-width="1.600" stroke-linecap="round" opacity=".8"/><path d="M35.600 35.800h7.800l-3.900 6.700z" fill="#3a3a3a"/></g>
<g transform="translate(144 619)"><path d="M22 13L40.500 6.500 36 26Q27 24 22 13z" fill="url(#gCone)" stroke="#151515" stroke-width="1.500" stroke-linejoin="round"/><path d="M23.500 13.800Q28 21.500 35 24.300L36 21Q29.500 19 25.500 13z" fill="#fff3d6"/><path d="M35.600 35.800h7.800l-3.900 6.700z" fill="#3a3a3a"/></g>
<g transform="translate(192 619)"><path d="M7 8.500H20M7 25H20M22.500 25V40M38.500 27V40M25 36.500H36" fill="none" stroke="#151515" stroke-width="1.700"/><path d="M11.500 12V21.500M11.500 11L9.700 14.500H13.300zM11.500 22.500L9.700 19H13.300zM25 36.500L28.500 34.700V38.300zM36 36.500L32.500 34.700V38.300z" fill="#151515" stroke="#151515" stroke-width="1"/><rect x="20.6" y="6.6" width="4.8" height="4.8" fill="#fff" stroke="#151515" stroke-width="1.5"/><rect x="20.6" y="22.6" width="4.8" height="4.8" fill="#fff" stroke="#151515" stroke-width="1.5"/><rect x="36.1" y="22.6" width="4.8" height="4.8" fill="#fff" stroke="#151515" stroke-width="1.5"/><path d="M35.600 36.300h7.800l-3.900 6.700z" fill="#3a3a3a"/></g>
</svg>
<!-- TAB BAR -->
<div class="a" style="left:298px;top:128px;width:1254px;height:41px;background:linear-gradient(#fbfbfb,#f0f0f0);border-bottom:1px solid #9a9a9a"></div>
<div class="a" style="left:298px;top:169px;width:1254px;height:2px;background:#8e939c"></div>
<svg style="left:309px;top:133px" width="36" height="32" viewBox="0 0 36 32"><g fill="none" stroke="#5e5e5e" stroke-width="1.100"><rect x="1" y="1.500" width="33" height="28.500"/><path d="M17.500 1.500v28.500M1 15.500h33"/></g><g stroke="#5e5e5e" stroke-width="1.800"><path d="M1 2h6M17.500 2h6M1 16h6M17.500 16h6"/></g></svg>
<svg style="left:360px;top:133px" width="36" height="32" viewBox="0 0 36 32"><rect x="1.500" y="1.500" width="31.500" height="28" fill="#f8f8f8" stroke="#4a8fe6" stroke-width="1.300"/><path d="M1.500 2h7" stroke="#4a8fe6" stroke-width="2.200"/></svg>
<div class="a" style="left:413px;top:138px;width:1.500px;height:22px;background:#b0b0b0"></div>
<div class="a" style="left:593px;top:138px;width:1.500px;height:22px;background:#b0b0b0"></div>
<div class="a" style="left:693px;top:138px;width:1.500px;height:22px;background:#b0b0b0"></div>
<div class="a" style="left:809px;top:138px;width:1.500px;height:22px;background:#b0b0b0"></div>
<div class="t" style="left:444px;top:139px;font-size:22px;color:#4a4a4a">Perspective</div>
<div class="t" style="left:624px;top:139px;font-size:22px;color:#4a4a4a">Top</div>
<div class="t" style="left:724px;top:139px;font-size:22px;color:#4a4a4a">Front</div>
<div class="t" style="left:841px;top:139px;font-size:22px;color:#3c83dc">Right</div>
<!-- VIEWPORT -->
<div class="a" style="left:298px;top:171px;width:1254px;height:940px;background:#a5aab4;overflow:hidden">
<svg style="left:0;top:0" width="1254" height="940" viewBox="298 171 1254 940">
<path d="M298 177.8H1552M298 202.5H1552M298 227.2H1552M298 251.9H1552M298 276.6H1552M298 326.0H1552M298 350.7H1552M321.4 171V1111M298 375.4H1552M346.1 171V1111M298 400.1H1552M370.8 171V1111M298 424.8H1552M395.4 171V1111M298 449.4H1552M420.1 171V1111M298 474.1H1552M444.8 171V1111M298 498.8H1552M469.5 171V1111M298 523.5H1552M518.9 171V1111M298 572.9H1552M543.6 171V1111M298 597.6H1552M568.3 171V1111M298 622.3H1552M593.0 171V1111M298 647.0H1552M617.6 171V1111M298 671.6H1552M642.3 171V1111M298 696.3H1552M667.0 171V1111M298 721.0H1552M691.7 171V1111M298 745.7H1552M716.4 171V1111M298 770.4H1552M765.8 171V1111M298 819.8H1552M790.5 171V1111M298 844.5H1552M815.2 171V1111M298 869.2H1552M839.9 171V1111M298 893.9H1552M864.5 171V1111M298 918.5H1552M889.2 171V1111M298 943.2H1552M913.9 171V1111M298 967.9H1552M938.6 171V1111M298 992.6H1552M963.3 171V1111M298 1017.3H1552M1012.7 171V1111M298 1066.7H1552M1037.4 171V1111M298 1091.4H1552M1062.1 171V1111M1086.8 171V1111M1111.5 171V1111M1136.1 171V1111M1160.8 171V1111M1185.5 171V1111M1210.2 171V1111M1259.6 171V1111M1284.3 171V1111M1309.0 171V1111M1333.7 171V1111M1358.3 171V1111M1383.0 171V1111M1407.7 171V1111M1432.4 171V1111M1457.1 171V1111M1506.5 171V1111M1531.2 171V1111" stroke="#949aa5" stroke-width="1.100" fill="none" opacity=".75"/>
<path d="M298 301.3H1552M494.2 171V1111M298 548.2H1552M741.1 171V1111M298 795.1H1552M988.0 171V1111M298 1042.0H1552M1234.9 171V1111M1481.8 171V1111" stroke="#848a95" stroke-width="1.500" fill="none"/>
<path d="M988.0 171V1042.0" stroke="#4f8f55" stroke-width="2.800" fill="none"/>
<path d="M988.0 1042.0H1552" stroke="#a84a40" stroke-width="2.600" fill="none"/>
<path d="M696.8 1061.2 L703.5 1055.1 L710.2 1049.1 L716.9 1043.0 L723.4 1036.8 L729.6 1030.6 L735.5 1024.3 L740.9 1018.0 L746.1 1011.8 L751.0 1005.5 L755.8 999.1 L760.4 992.6 L764.9 986.0 L769.2 979.4 L773.3 972.8 L777.2 966.2 L780.7 959.7 L784.0 953.4 L787.0 947.1 L789.7 940.8 L792.4 934.6 L794.8 928.4 L797.1 922.1 L799.3 915.9 L801.3 909.7 L803.2 903.5 L805.0 897.3 L806.7 891.1 L808.3 885.0 L809.8 878.9 L811.2 872.9 L812.5 867.0 L813.6 861.1 L814.7 855.1 L815.7 848.7 L816.7 841.8 L817.6 834.3 L818.5 826.3 L819.3 817.8 L820.0 809.1 L820.7 800.2 L821.3 791.1 L821.8 782.0 L822.3 773.0 L822.7 764.5 L823.0 756.7 L823.3 749.6 L823.6 743.2 L823.7 737.3 L823.9 731.5 L823.9 725.7 L824.0 719.8 L824.0 713.8 L823.9 707.8 L823.8 701.9 L823.7 695.9 L823.5 689.9 L823.3 683.9 L823.1 677.9 L822.8 671.9 L822.5 665.9 L822.1 659.9 L821.7 653.8 L821.2 647.8 L820.7 641.9 L820.1 635.9 L819.5 629.9 L818.8 623.9 L818.1 617.9 L817.3 611.9 L816.5 605.9 L815.7 599.9 L814.8 594.0 L813.9 588.0 L813.0 582.1 L812.1 576.2 L811.2 570.3 L810.3 564.5 L809.4 558.6 L808.5 552.7 L807.7 546.9 L806.9 541.0 L806.1 535.2 L805.4 529.3 L804.6 523.3 L803.9 517.4 L803.1 511.3 L802.4 505.3 L801.7 499.4 L801.0 493.9 L800.4 488.8 L800.0 484.3 L799.6 480.3 L799.4 476.6 L799.2 472.9 L799.1 468.8 L799.1 464.3 L799.3 459.4 L799.5 454.2 L799.7 448.9 L800.0 443.6 L800.3 438.4 L800.6 433.3 L801.0 428.3 L801.5 423.4 L802.0 418.7 L802.6 414.1 L803.3 409.5 L804.0 405.1 L804.9 400.8 L805.9 396.5 L807.0 392.2 L808.2 388.0 L809.5 383.8 L811.0 379.7 L812.5 375.7 L814.2 371.8 L815.9 368.0 L817.8 364.3 L819.8 360.7 L821.9 357.2 L824.2 353.7 L826.7 350.3 L829.3 346.9 L832.0 343.5 L834.8 340.3 L837.6 337.2 L840.5 334.3 L843.4 331.4 L846.3 328.7 L849.2 326.0 L852.0 323.5 L854.9 321.1 L857.8 318.7 L860.8 316.4 L863.8 314.1 L866.9 311.9 L869.9 309.7 L872.9 307.6 L875.9 305.8 L878.8 304.0 L881.9 302.4 L885.1 300.9 L888.4 299.6 L891.7 298.3 L895.0 297.2 L898.3 296.2 L901.6 295.4 L904.9 294.6 L908.2 294.0 L911.3 293.5 L914.4 293.1 L917.4 292.8 L920.2 292.6 L923.1 292.5 L926.0 292.5 L929.0 292.5 L931.9 292.7 L934.8 292.9 L937.7 293.2 L940.6 293.7 L943.5 294.2 L946.4 294.8 L949.4 295.5 L952.3 296.3 L955.3 297.1 L958.2 298.1 L961.1 299.0 L963.8 300.1 L966.6 301.2 L969.2 302.3 L971.7 303.4 L974.1 304.7 L976.4 305.9 L978.6 307.2 L980.7 308.5 L982.8 309.9 L984.8 311.4 L986.8 313.0 L988.9 314.7 L991.1 316.5 L993.4 318.4 L995.6 320.2 L997.7 322.0 L999.7 323.8 L1001.6 325.6 L1003.3 327.3 L1005.0 329.1 L1006.7 330.9 L1008.2 332.8 L1009.7 334.6 L1011.1 336.3 L1012.4 338.1 L1013.6 339.7 L1014.7 341.5 L1015.9 343.5 L1017.2 345.9 L1018.5 348.5 L1019.8 351.3 L1021.1 354.2 L1022.3 357.0 L1023.4 359.8 L1024.4 362.5 L1025.3 365.2 L1026.3 368.0 L1027.2 370.9 L1028.2 373.8 L1029.2 376.7 L1030.3 379.8 L1031.5 382.9 L1032.8 386.1 L1034.2 389.3 L1035.7 392.4 L1037.4 395.5 L1039.3 398.6 L1041.3 401.6 L1043.5 404.6 L1045.8 407.4 L1048.3 410.1 L1050.9 412.7 L1053.6 415.1 L1056.3 417.4 L1059.2 419.5 L1062.1 421.4 L1065.1 423.2 L1068.1 424.9 L1071.2 426.5 L1074.3 427.9 L1077.6 429.3 L1081.0 430.6 L1084.5 431.8 L1088.0 432.9 L1091.7 433.8 L1095.4 434.7 L1099.1 435.4 L1102.8 436.0 L1106.6 436.4 L1110.3 436.7 L1114.0 436.9 L1117.8 437.0 L1121.4 436.9 L1125.0 436.6 L1128.6 436.2 L1132.1 435.6 L1135.7 434.8 L1139.1 433.8 L1142.5 432.4 L1145.6 430.9 L1148.6 429.1 L1151.4 427.1 L1153.9 424.9 L1156.3 422.4 L1158.3 419.8 L1160.2 417.1 L1161.7 414.2 L1163.0 411.3 L1164.0 408.3 L1164.8 405.2 L1165.2 402.0 L1165.4 398.7 L1165.2 395.4 L1164.8 392.2 L1164.0 389.0 L1162.9 386.0 L1161.7 383.1 L1160.2 380.3 L1158.5 377.5 L1156.6 374.9 L1154.5 372.2 L1152.2 369.7 L1149.7 367.2 L1147.0 364.8 L1144.3 362.6 L1141.5 360.5 L1138.8 358.6 L1136.1 356.8 L1133.5 355.1 L1130.9 353.5 L1128.2 351.9 L1125.3 350.3 L1122.0 348.6 L1118.5 346.8 L1114.7 345.0 L1110.7 343.1 L1106.6 341.2 L1102.6 339.3 L1102.6 339.3" fill="none" stroke="#6c7078" stroke-width="2.700" stroke-linejoin="round"/>
<path d="M680.4 1042.8 L687.1 1036.9 L693.7 1030.9 L700.1 1025.0 L706.2 1019.2 L711.9 1013.5 L717.2 1007.8 L722.2 1002.1 L726.9 996.4 L731.4 990.6 L735.9 984.6 L740.2 978.5 L744.5 972.4 L748.5 966.2 L752.3 960.1 L755.8 954.1 L759.0 948.2 L761.9 942.5 L764.6 936.8 L767.2 931.1 L769.6 925.4 L771.8 919.6 L773.9 913.9 L775.9 908.1 L777.8 902.3 L779.6 896.4 L781.3 890.6 L782.9 884.8 L784.5 879.0 L785.9 873.2 L787.2 867.5 L788.4 862.0 L789.4 856.6 L790.4 851.0 L791.4 845.1 L792.3 838.7 L793.1 831.5 L794.0 823.8 L794.8 815.6 L795.5 807.1 L796.2 798.4 L796.7 789.6 L797.3 780.7 L797.7 771.8 L798.1 763.4 L798.5 755.6 L798.7 748.7 L799.0 742.4 L799.1 736.6 L799.3 731.0 L799.4 725.4 L799.4 719.7 L799.4 714.0 L799.3 708.2 L799.2 702.3 L799.1 696.5 L798.9 690.6 L798.8 684.8 L798.5 678.9 L798.3 673.1 L798.0 667.3 L797.6 661.5 L797.2 655.7 L796.7 649.9 L796.2 644.1 L795.6 638.3 L795.0 632.5 L794.4 626.7 L793.7 620.9 L792.9 615.1 L792.2 609.3 L791.3 603.5 L790.5 597.6 L789.6 591.8 L788.7 585.9 L787.8 580.0 L786.8 574.1 L786.0 568.1 L785.1 562.2 L784.2 556.3 L783.4 550.3 L782.5 544.3 L781.8 538.3 L781.0 532.4 L780.2 526.4 L779.5 520.4 L778.7 514.4 L778.0 508.3 L777.2 502.4 L776.6 496.7 L776.0 491.5 L775.5 486.7 L775.1 482.3 L774.8 478.1 L774.6 473.7 L774.5 469.0 L774.5 463.9 L774.7 458.6 L774.9 453.1 L775.1 447.6 L775.4 442.2 L775.8 436.8 L776.1 431.5 L776.5 426.2 L777.0 421.0 L777.6 415.8 L778.2 410.6 L779.0 405.6 L779.9 400.6 L780.9 395.7 L782.0 390.7 L783.3 385.8 L784.7 380.9 L786.2 376.0 L787.9 371.2 L789.7 366.5 L791.7 361.9 L793.7 357.3 L796.0 352.8 L798.5 348.4 L801.1 344.0 L804.0 339.7 L807.0 335.5 L810.1 331.5 L813.2 327.7 L816.4 324.0 L819.7 320.4 L822.9 317.0 L826.2 313.7 L829.5 310.6 L832.8 307.7 L836.1 304.8 L839.3 302.1 L842.6 299.4 L845.8 296.9 L849.1 294.5 L852.4 292.0 L855.8 289.6 L859.3 287.1 L863.1 284.8 L867.0 282.5 L871.0 280.4 L875.1 278.5 L879.3 276.7 L883.4 275.1 L887.6 273.7 L891.7 272.5 L895.9 271.4 L899.9 270.5 L903.9 269.8 L907.8 269.1 L911.6 268.7 L915.3 268.3 L919.0 268.0 L922.6 267.9 L926.2 267.9 L929.8 268.0 L933.5 268.1 L937.1 268.4 L940.8 268.8 L944.5 269.4 L948.1 270.0 L951.8 270.8 L955.4 271.6 L958.9 272.6 L962.4 273.6 L965.9 274.7 L969.3 275.9 L972.7 277.1 L976.0 278.4 L979.2 279.8 L982.4 281.3 L985.5 282.9 L988.5 284.5 L991.4 286.2 L994.3 288.0 L997.0 289.9 L999.7 291.8 L1002.1 293.8 L1004.5 295.7 L1006.8 297.5 L1009.1 299.4 L1011.4 301.4 L1013.9 303.5 L1016.3 305.7 L1018.6 307.9 L1020.9 310.1 L1023.1 312.4 L1025.1 314.7 L1027.0 316.9 L1028.9 319.1 L1030.6 321.3 L1032.3 323.6 L1034.0 326.0 L1035.7 328.6 L1037.4 331.5 L1039.0 334.6 L1040.6 337.8 L1042.2 341.1 L1043.7 344.4 L1045.1 347.8 L1046.3 351.0 L1047.5 354.1 L1048.6 357.1 L1049.6 360.1 L1050.6 363.0 L1051.5 365.9 L1052.5 368.7 L1053.4 371.4 L1054.4 374.0 L1055.4 376.4 L1056.5 378.8 L1057.6 381.1 L1058.8 383.3 L1060.1 385.4 L1061.4 387.4 L1062.8 389.4 L1064.4 391.3 L1066.1 393.1 L1067.8 394.8 L1069.6 396.4 L1071.4 397.9 L1073.3 399.3 L1075.3 400.6 L1077.4 401.9 L1079.7 403.2 L1082.0 404.4 L1084.4 405.5 L1086.8 406.5 L1089.3 407.5 L1092.0 408.4 L1094.7 409.2 L1097.5 409.9 L1100.4 410.6 L1103.3 411.1 L1106.2 411.6 L1109.1 411.9 L1112.0 412.2 L1114.8 412.3 L1117.6 412.4 L1120.2 412.3 L1122.8 412.1 L1125.2 411.8 L1127.4 411.5 L1129.4 411.0 L1131.1 410.5 L1132.6 409.9 L1133.9 409.3 L1135.0 408.6 L1136.0 407.8 L1136.9 407.1 L1137.7 406.2 L1138.4 405.4 L1139.1 404.4 L1139.6 403.4 L1140.0 402.4 L1140.4 401.4 L1140.6 400.5 L1140.7 399.6 L1140.8 398.7 L1140.7 397.8 L1140.6 396.9 L1140.4 396.0 L1140.0 395.0 L1139.5 393.8 L1138.8 392.5 L1138.0 391.1 L1136.9 389.6 L1135.7 388.1 L1134.4 386.6 L1132.9 385.1 L1131.2 383.6 L1129.2 382.0 L1127.1 380.4 L1124.8 378.8 L1122.5 377.3 L1120.3 375.9 L1118.2 374.6 L1116.0 373.3 L1113.6 372.0 L1110.9 370.5 L1107.7 368.9 L1104.1 367.2 L1100.3 365.4 L1096.3 363.5 L1092.2 361.7 L1092.2 361.7" fill="none" stroke="#72767e" stroke-width="1.800" stroke-linejoin="round"/>
<path d="M729.6 1030.6L711.9 1013.5M755.8 999.1L735.9 984.6M777.2 966.2L755.8 954.1M792.4 934.6L769.6 925.4M803.2 903.5L779.6 896.4M811.2 872.9L787.2 867.5M816.7 841.8L792.3 838.7M819.6 813.5L795.1 811.4M822.9 760.5L798.3 759.4M823.9 710.8L799.3 711.1M822.1 659.9L797.6 661.5M816.9 608.9L792.6 612.2M812.5 579.2L788.2 582.9M808.5 552.7L784.2 556.3M801.3 496.6L776.9 499.5M799.1 468.8L774.5 469.0M800.0 443.6L775.4 442.2M802.0 418.7L777.6 415.8M805.9 396.5L782.0 390.7M812.5 375.7L789.7 366.5M821.9 357.2L801.1 344.0M834.8 340.3L816.4 324.0M849.2 326.0L832.8 307.7M863.8 314.1L849.1 294.5M878.8 304.0L867.0 282.5M895.0 297.2L887.6 273.7M911.3 293.5L907.8 269.1M926.0 292.5L926.2 267.9M940.6 293.7L944.5 269.4M955.3 297.1L962.4 273.6M969.2 302.3L979.2 279.8M980.7 308.5L994.3 288.0M987.8 313.8L1003.3 294.7M995.6 320.2L1011.4 301.4M1001.6 325.6L1018.6 307.9M1007.4 331.8L1026.1 315.8M1013.0 338.9L1033.2 324.8M1017.2 345.9L1039.0 334.6M1020.5 352.8L1042.9 342.8M1023.9 361.1L1046.9 352.6M1027.2 370.9L1050.6 363.0M1030.3 379.8L1053.4 371.4M1034.2 389.3L1056.5 378.8M1040.3 400.1L1060.7 386.4M1047.0 408.8L1065.2 392.2M1054.9 416.2L1070.5 397.2M1065.1 423.2L1077.4 401.9M1074.3 427.9L1084.4 405.5M1084.5 431.8L1092.0 408.4M1095.4 434.7L1100.4 410.6M1106.6 436.4L1109.1 411.9M1115.9 437.0L1116.2 412.4M1128.6 436.2L1125.2 411.8M1139.1 433.8L1131.1 410.5M1151.4 427.1L1136.0 407.8M1161.0 415.7L1139.4 403.9M1165.2 402.0L1140.7 399.6M1163.5 387.5L1140.2 395.5M1147.0 364.8L1131.2 383.6M1128.2 351.9L1116.0 373.3M1108.7 342.2L1098.3 364.5" fill="none" stroke="#72767e" stroke-width="1.300"/>
<g transform="translate(688.6 1052.0) rotate(138.1)"><path d="M0 -12.3A10.5 12.3 0 0 1 0 12.3" fill="none" stroke="#6c7078" stroke-width="2.300"/><path d="M0 -12.3V12.3" stroke="#6c7078" stroke-width="2.200"/><path d="M0 0H10.5" stroke="#72767e" stroke-width="1.200"/><path d="M0 -12.3A4.9 12.3 0 0 1 0 12.3" fill="none" stroke="#72767e" stroke-width="1.100"/></g>
<g transform="translate(1097.4 350.5) rotate(-155.1)"><path d="M0 -12.3A10.5 12.3 0 0 1 0 12.3" fill="none" stroke="#6c7078" stroke-width="2.300"/><path d="M0 -12.3V12.3" stroke="#6c7078" stroke-width="2.200"/><path d="M0 0H10.5" stroke="#72767e" stroke-width="1.200"/><path d="M0 -12.3A4.9 12.3 0 0 1 0 12.3" fill="none" stroke="#72767e" stroke-width="1.100"/></g>
<path d="M688.6 1052.0 L695.3 1046.0 L701.9 1040.0 L708.5 1034.0 L714.8 1028.0 L720.8 1022.0 L726.3 1016.0 L731.5 1010.1 L736.5 1004.1 L741.2 998.0 L745.8 991.9 L750.3 985.6 L754.7 979.2 L758.9 972.8 L762.8 966.4 L766.5 960.1 L769.8 954.0 L772.9 947.9 L775.8 941.9 L778.5 936.0 L781.0 930.0 L783.3 924.0 L785.5 918.0 L787.6 912.0 L789.6 906.0 L791.4 900.0 L793.2 894.0 L794.8 888.0 L796.4 882.0 L797.8 876.0 L799.2 870.2 L800.4 864.5 L801.5 858.8 L802.6 853.1 L803.5 846.9 L804.5 840.2 L805.4 832.9 L806.2 825.0 L807.0 816.7 L807.8 808.1 L808.4 799.3 L809.0 790.4 L809.5 781.3 L810.0 772.4 L810.4 764.0 L810.7 756.1 L811.0 749.1 L811.3 742.8 L811.4 736.9 L811.6 731.2 L811.6 725.5 L811.7 719.8 L811.7 713.9 L811.6 708.0 L811.5 702.1 L811.4 696.2 L811.2 690.3 L811.0 684.4 L810.8 678.4 L810.6 672.5 L810.2 666.6 L809.9 660.7 L809.4 654.8 L809.0 648.9 L808.4 643.0 L807.9 637.1 L807.2 631.2 L806.6 625.3 L805.9 619.4 L805.1 613.5 L804.3 607.6 L803.5 601.7 L802.6 595.8 L801.7 589.9 L800.8 584.0 L799.9 578.1 L799.0 572.2 L798.1 566.3 L797.2 560.4 L796.4 554.5 L795.5 548.6 L794.7 542.7 L793.9 536.8 L793.2 530.8 L792.4 524.9 L791.7 518.9 L790.9 512.9 L790.2 506.8 L789.4 500.9 L788.8 495.3 L788.2 490.2 L787.7 485.5 L787.4 481.3 L787.1 477.3 L786.9 473.3 L786.8 468.9 L786.8 464.1 L787.0 459.0 L787.2 453.7 L787.4 448.3 L787.7 442.9 L788.0 437.6 L788.4 432.4 L788.8 427.3 L789.2 422.2 L789.8 417.2 L790.4 412.3 L791.1 407.6 L792.0 402.9 L792.9 398.2 L793.9 393.6 L795.1 389.0 L796.4 384.4 L797.9 379.9 L799.4 375.5 L801.1 371.1 L802.9 366.8 L804.8 362.6 L806.9 358.5 L809.1 354.5 L811.5 350.6 L814.1 346.7 L816.8 342.9 L819.7 339.2 L822.6 335.6 L825.6 332.1 L828.7 328.8 L831.7 325.6 L834.8 322.6 L837.9 319.6 L841.0 316.8 L844.1 314.1 L847.1 311.6 L850.2 309.1 L853.3 306.7 L856.4 304.3 L859.6 302.0 L862.8 299.6 L866.1 297.4 L869.5 295.3 L872.9 293.3 L876.5 291.4 L880.1 289.7 L883.8 288.1 L887.6 286.7 L891.3 285.5 L895.0 284.4 L898.7 283.4 L902.4 282.6 L906.0 281.9 L909.6 281.3 L913.0 280.9 L916.3 280.5 L919.6 280.3 L922.9 280.2 L926.1 280.2 L929.4 280.3 L932.7 280.4 L935.9 280.7 L939.2 281.0 L942.5 281.5 L945.8 282.1 L949.1 282.8 L952.4 283.6 L955.6 284.4 L958.9 285.4 L962.0 286.4 L965.2 287.4 L968.3 288.6 L971.3 289.8 L974.2 291.1 L977.0 292.4 L979.8 293.8 L982.4 295.2 L985.0 296.7 L987.5 298.3 L989.9 299.9 L992.2 301.6 L994.5 303.4 L996.7 305.2 L998.9 307.0 L1001.2 308.9 L1003.5 310.8 L1005.8 312.8 L1008.0 314.7 L1010.1 316.7 L1012.1 318.7 L1014.0 320.8 L1015.9 322.8 L1017.6 324.8 L1019.3 326.8 L1020.9 328.8 L1022.4 330.8 L1023.8 332.9 L1025.2 335.1 L1026.6 337.5 L1028.1 340.2 L1029.6 343.2 L1031.0 346.2 L1032.4 349.3 L1033.7 352.4 L1034.8 355.4 L1035.9 358.3 L1036.9 361.2 L1037.9 364.0 L1038.9 366.9 L1039.9 369.8 L1040.9 372.7 L1041.9 375.6 L1042.9 378.4 L1044.1 381.3 L1045.3 384.0 L1046.7 386.7 L1048.1 389.4 L1049.7 392.0 L1051.3 394.5 L1053.2 397.0 L1055.1 399.3 L1057.2 401.6 L1059.3 403.7 L1061.6 405.8 L1063.9 407.6 L1066.3 409.4 L1068.7 411.0 L1071.3 412.6 L1073.9 414.0 L1076.6 415.4 L1079.4 416.7 L1082.2 417.9 L1085.2 419.1 L1088.2 420.1 L1091.3 421.0 L1094.6 421.9 L1097.9 422.6 L1101.2 423.3 L1104.5 423.8 L1107.8 424.2 L1111.1 424.5 L1114.4 424.6 L1117.7 424.7 L1120.8 424.6 L1123.9 424.4 L1126.9 424.0 L1129.8 423.5 L1132.5 422.9 L1135.1 422.1 L1137.5 421.2 L1139.8 420.1 L1141.8 418.8 L1143.7 417.5 L1145.4 416.0 L1147.0 414.3 L1148.4 412.6 L1149.6 410.7 L1150.7 408.8 L1151.5 406.9 L1152.2 404.9 L1152.7 402.8 L1153.0 400.8 L1153.1 398.7 L1153.0 396.6 L1152.7 394.6 L1152.2 392.5 L1151.5 390.5 L1150.6 388.4 L1149.5 386.4 L1148.2 384.3 L1146.8 382.2 L1145.1 380.2 L1143.3 378.1 L1141.3 376.1 L1139.1 374.2 L1136.8 372.3 L1134.3 370.5 L1131.8 368.7 L1129.3 367.0 L1126.9 365.5 L1124.6 364.0 L1122.1 362.6 L1119.4 361.1 L1116.5 359.6 L1113.1 357.9 L1109.4 356.1 L1105.5 354.3 L1101.5 352.4 L1097.4 350.5 L1097.4 350.5" fill="none" stroke="#eee66e" stroke-width="2.300" stroke-linejoin="round" stroke-linecap="round"/>
<path d="M696 666H915.3" stroke="#e56a58" stroke-width="3.600" stroke-dasharray="1.300 1.400" fill="none" opacity=".8"/>
<path d="M919.8 672V1046" stroke="#86d383" stroke-width="3.600" stroke-dasharray="1.300 1.400" fill="none" opacity=".6"/>
<path d="M915.3 671L878.500 708" stroke="#ececec" stroke-width="1.400" stroke-dasharray="1.600 1.900" opacity=".85" fill="none"/>
<circle cx="872.400" cy="713.800" r="8.100" fill="none" stroke="#f4f4f4" stroke-width="1.900"/>
<circle cx="872.400" cy="713.800" r="1" fill="#c9a8a8"/>
<path d="M792.400 666.300A127.900 127.900 0 0 0 920.3 794.200" fill="none" stroke="#7d8bf0" stroke-width="4.600" opacity=".55"/>
<path d="M792.400 666.300A127.900 127.900 0 0 0 920.3 794.200" fill="none" stroke="#1e2ed2" stroke-width="3"/>
<rect x="681.300" y="659.600" width="12.200" height="12.200" rx="2.500" fill="#ab9ea6" stroke="#e9503a" stroke-width="3.700"/>
<rect x="914.300" y="1047" width="12" height="12" rx="2.500" fill="#93c796" stroke="#52d24a" stroke-width="3.600"/>
<path d="M936.700 666H1020" stroke="#e8482c" stroke-width="4.200" fill="none"/>
<path d="M1017 658.4L1049.500 666L1017 673.6z" fill="#e8482c"/>
<path d="M920.3 649.500V566" stroke="#5fd04a" stroke-width="5.600" fill="none" stroke-linecap="round"/>
<path d="M912.0999999999999 569L919.0999999999999 538.500H921.5L928.5 569z" fill="#5fd04a" stroke="#5fd04a" stroke-width="1" stroke-linejoin="round"/>
<rect x="917.0999999999999" y="662.8" width="6.400" height="6.400" fill="#fff" stroke="#111" stroke-width="2.200"/>
<path d="M985.500 571v29M1001 571v29M1016.500 571v29" stroke="#7fd27a" stroke-width="4" fill="none" opacity=".6"/>
<path d="M985 569.200h31.500M985 585.200h31.500M985 601.200h31.500" stroke="#d6503c" stroke-width="2.400" fill="none"/>
<path d="M356.500 1005V1053.500H403" stroke="#5d6068" stroke-width="1.500" fill="none"/>
<text x="361" y="1009" font-family="Liberation Sans, sans-serif" font-size="19" fill="#5d6068">z</text>
<text x="408" y="1057" font-family="Liberation Sans, sans-serif" font-size="19" fill="#5d6068">y</text>
<g transform="translate(1139.500 431)"><path d="M0 0V22.500L5.200 17.800 9 26.500 12.500 25 8.700 16.500H15.800z" fill="#111" stroke="#fff" stroke-width="1.700" stroke-linejoin="round"/></g>
</svg>
<div class="a" style="left:1px;top:1px;width:63px;height:31px;background:#3d69a5"></div>
<div class="t b" style="left:9px;top:8px;font-size:19.500px;color:#fff">Right</div>
</div>
<!-- RIGHT PANEL -->
<div class="a" style="left:1552px;top:128px;width:2px;height:984px;background:#2b2b2b"></div>
<div class="a" style="left:1554px;top:128px;width:494px;height:984px;background:#efefef"></div>
<div class="a" style="left:1554px;top:128px;width:494px;height:41px;background:linear-gradient(#fbfbfb,#efefef);border-bottom:1px solid #dadada"></div>
<svg style="left:1612px;top:136px" width="32" height="30" viewBox="0 0 32 30"><g fill="none" stroke="#6a6a6a" stroke-width="1.500" stroke-linejoin="round"><path d="M16 2.500L30 10.500 16 18.500 2 10.500z"/><path d="M4.800 15.200L2 16.800 16 24.800 30 16.800 27.200 15.200"/></g></svg>
<svg style="left:1652px;top:137px" width="30" height="30" viewBox="0 0 30 30"><g fill="none" stroke="#6a6a6a" stroke-width="1.500"><circle cx="15" cy="15" r="13.500"/><circle cx="15" cy="15" r="7"/></g></svg>
<svg style="left:1696px;top:138px" width="22" height="26" viewBox="0 0 22 26"><g fill="none" stroke="#6a6a6a" stroke-width="1.500" stroke-linejoin="round"><path d="M2 1.500h11.500l6 6V24H2z"/><path d="M13.500 1.500v6h6"/></g></svg>
<svg style="left:1730px;top:137px" width="28" height="30" viewBox="0 0 28 30"><g fill="none" stroke="#6a6a6a" stroke-width="1.500" stroke-linejoin="round"><path d="M2 9.500L15 2l11 5.500v13L13 28 2 22.500z"/><path d="M2 9.500L13 15l13-7.500M13 15v13"/></g></svg>
<svg style="left:1766px;top:139px" width="32" height="26" viewBox="0 0 32 26"><g fill="none" stroke="#6a6a6a" stroke-width="1.500" stroke-linejoin="round"><path d="M1.500 6.500h7l2.500-4h10l2.500 4h7V24h-29z"/><circle cx="16" cy="14.500" r="6.500"/><circle cx="16" cy="14.500" r="3.500"/></g></svg>
<svg style="left:1805px;top:139px" width="32" height="24" viewBox="0 0 32 24"><g fill="none" stroke="#a9a9a9" stroke-width="1.100"><path d="M10 2L30 8 20 22 2 13z"/><path d="M15 3.500L6.500 15.200M20 5L11 17.500M25 6.500L15.500 19.800M8 4.800L27.500 11.500M6 7.500L25 15M4 10.300L22.500 18.500"/></g><path d="M20 5l-3.200 4.600 6.700 2.500" fill="none" stroke="#777" stroke-width="1.600"/></svg>
<svg style="left:1844px;top:138px" width="32" height="28" viewBox="0 0 32 28"><g fill="none" stroke="#6a6a6a" stroke-width="1.500" stroke-linejoin="round" stroke-linecap="round"><path d="M8 2h18.500q3 0 3 2.500T26.500 7H24v15q0 4-4 4H4.500q-3 0-3-2.500T4.500 21H8z"/><path d="M8 21h10.500q2 0 2 2.500T20 26"/><path d="M24 7V2"/></g></svg>
<svg style="left:1882px;top:139px" width="30" height="26" viewBox="0 0 30 26"><rect x="1.500" y="1.500" width="27" height="22" fill="none" stroke="#6a6a6a" stroke-width="1.500"/><path d="M1 1.800h7" stroke="#6a6a6a" stroke-width="2.400"/></svg>
<svg style="left:1920px;top:137px" width="32" height="30" viewBox="0 0 32 30"><rect x="1.500" y="1.500" width="29" height="20.500" rx="2" fill="#c9dcf8" stroke="#5b9cf0" stroke-width="2.1"/><rect x="4.500" y="4.500" width="23" height="14" fill="#f4f4f4" stroke="#5b9cf0" stroke-width="1.300"/><path d="M13 22v4h6v-4M9 26.800h14" fill="none" stroke="#5b9cf0" stroke-width="1.600"/></svg>
<div class="t b" style="left:1962px;top:132px;font-size:36.500px;color:#424242">?</div>
<div class="a" style="left:2028px;top:170px;width:20px;height:587px;background:#f6f6f6;border-left:1px solid #e4e4e4"></div>
<div class="a" style="left:2033px;top:176px;width:12px;height:322px;background:#c5c5c5;border-radius:7px"></div>
<div class="t" style="left:1585px;top:185px;font-size:22px;color:#111">Viewport settings</div>
<div class="t" style="left:1601px;top:216px;color:#111">Active viewport:</div>
<div class="t" style="left:1750px;top:216px;color:#111">Right</div>
<div class="t" style="left:1536px;width:200px;text-align:right;top:255px;color:#111">Display mode:</div>
<div class="t" style="left:1536px;width:200px;text-align:right;top:295px;color:#111">Background</div>
<div class="a" style="left:1751px;top:250px;width:128px;height:27px;background:#fff;border-radius:5px;box-shadow:0 0 0 1px rgba(0,0,0,.10),0 1px 1.500px rgba(0,0,0,.25)"></div>
<div class="a" style="left:1856px;top:250px;width:23px;height:27px;background:linear-gradient(#66adfa,#3a86f2);border-radius:0 5px 5px 0"></div>
<svg style="left:1856px;top:250px" width="23" height="27" viewBox="0 0 23 27"><g fill="none" stroke="#fff" stroke-width="2" stroke-linecap="round" stroke-linejoin="round"><path d="M7.500 10.500l4-4 4 4M7.500 16.500l4 4 4-4"/></g></svg>
<div class="t" style="left:1762px;top:254px;color:#111">Wireframe</div>
<div class="a" style="left:1751px;top:290px;width:242px;height:27px;background:#fff;border-radius:5px;box-shadow:0 0 0 1px rgba(0,0,0,.10),0 1px 1.500px rgba(0,0,0,.25)"></div>
<div class="a" style="left:1970px;top:290px;width:23px;height:27px;background:linear-gradient(#66adfa,#3a86f2);border-radius:0 5px 5px 0"></div>
<svg style="left:1970px;top:290px" width="23" height="27" viewBox="0 0 23 27"><g fill="none" stroke="#fff" stroke-width="2" stroke-linecap="round" stroke-linejoin="round"><path d="M7.500 10.500l4-4 4 4M7.500 16.500l4 4 4-4"/></g></svg>
<div class="t" style="left:1762px;top:294px;color:#111">Use application settings</div>
<div class="t" style="left:1585px;top:334px;font-size:22px;color:#111">General settings</div>
<div class="a" style="left:1554px;top:170px;width:474px;height:587px;overflow:hidden">
<div class="a" style="left:156px;top:199px;width:19px;height:19px;border-radius:4px;background:#f6f6f6;border:1px solid #d8d8d8"></div>
<div class="t" style="left:183px;top:199px;color:#b3b3b3">Flat shading</div>
<div class="a" style="left:156px;top:228px;width:19px;height:19px;border-radius:4px;background:#f6f6f6;border:1px solid #d8d8d8"></div>
<div class="t" style="left:183px;top:228px;color:#b3b3b3">Shade vertex colors</div>
<div class="a" style="left:156px;top:257px;width:19px;height:19px;border-radius:4px;background:#f6f6f6;border:1px solid #d8d8d8"></div>
<div class="t" style="left:183px;top:257px;color:#b3b3b3">Shadows</div>
<div class="a" style="left:156px;top:286px;width:19px;height:19px;border-radius:4px;background:#4b97f3;border:1px solid #3f86e0"></div>
<svg style="left:156px;top:286px" width="19" height="19" viewBox="0 0 19 19"><path d="M4.500 10l3.300 3.800L14 4.800" fill="none" stroke="#fff" stroke-width="2.100" stroke-linecap="round" stroke-linejoin="round"/></svg>
<div class="t" style="left:183px;top:286px;color:#111">Surface isocurves</div>
<div class="a" style="left:156px;top:315px;width:19px;height:19px;border-radius:4px;background:#4b97f3;border:1px solid #3f86e0"></div>
<svg style="left:156px;top:315px" width="19" height="19" viewBox="0 0 19 19"><path d="M4.500 10l3.300 3.800L14 4.800" fill="none" stroke="#fff" stroke-width="2.100" stroke-linecap="round" stroke-linejoin="round"/></svg>
<div class="t" style="left:183px;top:315px;color:#111">Surface edges</div>
<div class="a" style="left:156px;top:344px;width:19px;height:19px;border-radius:4px;background:#4b97f3;border:1px solid #3f86e0"></div>
<svg style="left:156px;top:344px" width="19" height="19" viewBox="0 0 19 19"><path d="M4.500 10l3.300 3.800L14 4.800" fill="none" stroke="#fff" stroke-width="2.100" stroke-linecap="round" stroke-linejoin="round"/></svg>
<div class="t" style="left:183px;top:344px;color:#111">Mesh wires</div>
<div class="a" style="left:156px;top:373px;width:19px;height:19px;border-radius:4px;background:#4b97f3;border:1px solid #3f86e0"></div>
<svg style="left:156px;top:373px" width="19" height="19" viewBox="0 0 19 19"><path d="M4.500 10l3.300 3.800L14 4.800" fill="none" stroke="#fff" stroke-width="2.100" stroke-linecap="round" stroke-linejoin="round"/></svg>
<div class="t" style="left:183px;top:373px;color:#111">Curves</div>
<div class="a" style="left:156px;top:401px;width:19px;height:19px;border-radius:4px;background:#f6f6f6;border:1px solid #d8d8d8"></div>
<svg style="left:156px;top:401px" width="19" height="19" viewBox="0 0 19 19"><path d="M4.500 10l3.300 3.800L14 4.800" fill="none" stroke="#9a9a9a" stroke-width="1.700" stroke-linecap="round" stroke-linejoin="round"/></svg>
<div class="t" style="left:183px;top:401px;color:#b3b3b3">Hidden lines</div>
<div class="a" style="left:156px;top:430px;width:19px;height:19px;border-radius:4px;background:#f6f6f6;border:1px solid #d8d8d8"></div>
<svg style="left:156px;top:430px" width="19" height="19" viewBox="0 0 19 19"><path d="M4.500 10l3.300 3.800L14 4.800" fill="none" stroke="#9a9a9a" stroke-width="1.700" stroke-linecap="round" stroke-linejoin="round"/></svg>
<div class="t" style="left:183px;top:430px;color:#b3b3b3">Edges</div>
<div class="a" style="left:156px;top:459px;width:19px;height:19px;border-radius:4px;background:#f6f6f6;border:1px solid #d8d8d8"></div>
<svg style="left:156px;top:459px" width="19" height="19" viewBox="0 0 19 19"><path d="M4.500 10l3.300 3.800L14 4.800" fill="none" stroke="#9a9a9a" stroke-width="1.700" stroke-linecap="round" stroke-linejoin="round"/></svg>
<div class="t" style="left:183px;top:459px;color:#b3b3b3">Silhouettes</div>
<div class="a" style="left:156px;top:488px;width:19px;height:19px;border-radius:4px;background:#f6f6f6;border:1px solid #d8d8d8"></div>
<svg style="left:156px;top:488px" width="19" height="19" viewBox="0 0 19 19"><path d="M4.500 10l3.300 3.800L14 4.800" fill="none" stroke="#9a9a9a" stroke-width="1.700" stroke-linecap="round" stroke-linejoin="round"/></svg>
<div class="t" style="left:183px;top:488px;color:#b3b3b3">Creases</div>
<div class="a" style="left:156px;top:517px;width:19px;height:19px;border-radius:4px;background:#f6f6f6;border:1px solid #d8d8d8"></div>
<div class="t" style="left:183px;top:517px;color:#b3b3b3">Seams</div>
<div class="a" style="left:156px;top:546px;width:19px;height:19px;border-radius:4px;background:#f6f6f6;border:1px solid #d8d8d8"></div>
<svg style="left:156px;top:546px" width="19" height="19" viewBox="0 0 19 19"><path d="M4.500 10l3.300 3.800L14 4.800" fill="none" stroke="#9a9a9a" stroke-width="1.700" stroke-linecap="round" stroke-linejoin="round"/></svg>
<div class="t" style="left:183px;top:546px;color:#b3b3b3">Intersections</div>
<div class="a" style="left:156px;top:574px;width:19px;height:19px;border-radius:4px;background:#4b97f3;border:1px solid #3f86e0"></div>
<svg style="left:156px;top:574px" width="19" height="19" viewBox="0 0 19 19"><path d="M4.500 10l3.300 3.800L14 4.800" fill="none" stroke="#fff" stroke-width="2.100" stroke-linecap="round" stroke-linejoin="round"/></svg>
<div class="t" style="left:183px;top:574px;color:#111">Lights</div>
</div>
<div class="a" style="left:1554px;top:757px;width:494px;height:2px;background:#6e6e6e"></div>
<div class="a" style="left:1554px;top:759px;width:494px;height:43px;background:linear-gradient(#fbfbfb,#ececec);border-bottom:1px solid #d6d6d6"></div>
<svg style="left:1612px;top:766px" width="32" height="30" viewBox="0 0 32 30"><g fill="none" stroke="#3f86e0" stroke-width="1.500" stroke-linejoin="round"><path d="M16 2.500L30 10.500 16 18.500 2 10.500z"/><path d="M4.800 15.200L2 16.800 16 24.800 30 16.800 27.200 15.200"/></g></svg>
<svg style="left:1652px;top:767px" width="30" height="30" viewBox="0 0 30 30"><g fill="none" stroke="#6a6a6a" stroke-width="1.500"><circle cx="15" cy="15" r="13.500"/><circle cx="15" cy="15" r="7"/></g></svg>
<svg style="left:1696px;top:768px" width="22" height="26" viewBox="0 0 22 26"><g fill="none" stroke="#6a6a6a" stroke-width="1.500" stroke-linejoin="round"><path d="M2 1.500h11.500l6 6V24H2z"/><path d="M13.500 1.500v6h6"/></g></svg>
<svg style="left:1730px;top:767px" width="28" height="30" viewBox="0 0 28 30"><g fill="none" stroke="#6a6a6a" stroke-width="1.500" stroke-linejoin="round"><path d="M2 9.500L15 2l11 5.500v13L13 28 2 22.500z"/><path d="M2 9.500L13 15l13-7.500M13 15v13"/></g></svg>
<svg style="left:1766px;top:769px" width="32" height="26" viewBox="0 0 32 26"><g fill="none" stroke="#6a6a6a" stroke-width="1.500" stroke-linejoin="round"><path d="M1.500 6.500h7l2.500-4h10l2.500 4h7V24h-29z"/><circle cx="16" cy="14.500" r="6.500"/><circle cx="16" cy="14.500" r="3.500"/></g></svg>
<svg style="left:1805px;top:769px" width="32" height="24" viewBox="0 0 32 24"><g fill="none" stroke="#a9a9a9" stroke-width="1.100"><path d="M10 2L30 8 20 22 2 13z"/><path d="M15 3.500L6.500 15.200M20 5L11 17.500M25 6.500L15.500 19.800M8 4.800L27.500 11.500M6 7.500L25 15M4 10.300L22.500 18.500"/></g><path d="M20 5l-3.200 4.600 6.700 2.500" fill="none" stroke="#777" stroke-width="1.600"/></svg>
<svg style="left:1844px;top:768px" width="32" height="28" viewBox="0 0 32 28"><g fill="none" stroke="#6a6a6a" stroke-width="1.500" stroke-linejoin="round" stroke-linecap="round"><path d="M8 2h18.500q3 0 3 2.500T26.500 7H24v15q0 4-4 4H4.500q-3 0-3-2.500T4.500 21H8z"/><path d="M8 21h10.500q2 0 2 2.500T20 26"/><path d="M24 7V2"/></g></svg>
<svg style="left:1882px;top:769px" width="30" height="26" viewBox="0 0 30 26"><rect x="1.500" y="1.500" width="27" height="22" fill="none" stroke="#6a6a6a" stroke-width="1.500"/><path d="M1 1.800h7" stroke="#6a6a6a" stroke-width="2.400"/></svg>
<svg style="left:1920px;top:767px" width="32" height="30" viewBox="0 0 32 30"><rect x="1.500" y="1.500" width="29" height="20.500" rx="2" fill="#dedede" stroke="#6a6a6a" stroke-width="1.6"/><rect x="4.500" y="4.500" width="23" height="14" fill="#f4f4f4" stroke="#6a6a6a" stroke-width="1.300"/><path d="M13 22v4h6v-4M9 26.800h14" fill="none" stroke="#6a6a6a" stroke-width="1.600"/></svg>
<div class="t b" style="left:1962px;top:762px;font-size:36.500px;color:#424242">?</div>
<div class="a" style="left:1554px;top:802px;width:494px;height:25px;background:#fafafa;border-bottom:1px solid #dadada"></div>
<div class="a" style="left:1554px;top:827px;width:494px;height:209px;background:#fff"></div>
<div class="a" style="left:1686px;top:804px;width:1px;height:19px;background:#e2e2e2"></div>
<div class="a" style="left:1722px;top:804px;width:1px;height:19px;background:#e2e2e2"></div>
<div class="a" style="left:1760px;top:804px;width:1px;height:19px;background:#e2e2e2"></div>
<div class="a" style="left:1836px;top:804px;width:1px;height:19px;background:#e2e2e2"></div>
<div class="a" style="left:1893px;top:804px;width:1px;height:19px;background:#e2e2e2"></div>
<div class="a" style="left:1935px;top:804px;width:1px;height:19px;background:#e2e2e2"></div>
<div class="t" style="left:1559px;top:803.500px;color:#222">Name</div>
<div class="t" style="left:1943px;top:803.500px;color:#222">Linetype</div>
<svg width="0" height="0"><defs><radialGradient id="bulbg" cx=".4" cy=".32" r=".7"><stop offset="0" stop-color="#ffe58a"/><stop offset=".55" stop-color="#f6b23a"/><stop offset="1" stop-color="#e08a14"/></radialGradient><linearGradient id="sph" x1=".2" y1=".1" x2=".7" y2=".95"><stop offset="0" stop-color="#d4d4d4"/><stop offset=".45" stop-color="#777"/><stop offset=".85" stop-color="#0c0c0c"/></linearGradient><linearGradient id="lk" x1="0" y1="0" x2="0" y2="1"><stop offset="0" stop-color="#f0b060"/><stop offset=".5" stop-color="#d98a2c"/><stop offset="1" stop-color="#b86a12"/></linearGradient></defs></svg>
<div class="t" style="left:1584px;top:831px;font-size:18.300px;color:#222">Default</div>
<div class="a" style="left:1692px;top:829px;width:22px;height:22px;border-radius:50%;background:#4b97f3;border:1px solid #3f86e0"></div>
<div class="a" style="left:1699px;top:836px;width:8px;height:8px;border-radius:50%;background:#fff"></div>
<svg style="left:1730px;top:828px" width="22" height="26" viewBox="0 0 22 26"><g opacity=".38"><path d="M11 1C5.500 1 1.500 4.600 1.500 9.200c0 3 1.900 4.800 3.600 6.800 1 1.200 1.700 2.300 1.900 3.500h8c.2-1.200.9-2.300 1.900-3.500 1.700-2 3.600-3.800 3.600-6.800C20.500 4.600 16.500 1 11 1z" fill="url(#bulbg)"/><rect x="7.300" y="19.500" width="7.400" height="2.500" fill="#c9c9c9"/><ellipse cx="11" cy="23" rx="3" ry="2.300" fill="#b9bcc4"/><ellipse cx="10.300" cy="22.600" rx="1.200" ry=".9" fill="#f2f2f2"/></g></svg>
<svg style="left:1786px;top:827px" width="26" height="26" viewBox="0 0 26 26"><g opacity=".38"><path d="M12.500 12V7.500q0-4.500 4.500-4.500t4.500 4.500V9" fill="none" stroke="#bdbdbd" stroke-width="2.600"/><rect x="2" y="12" width="15" height="11.500" rx="1.500" fill="url(#lk)"/><path d="M2 16h15M2 19.500h15" stroke="#a8600e" stroke-width=".8" opacity=".6"/></g></svg>
<div class="a" style="left:1854px;top:829px;width:23px;height:23px;background:#000;border:2px solid #141414"></div>
<svg style="left:1905px;top:830px" width="20" height="20" viewBox="0 0 20 20"><circle cx="10" cy="10" r="8.500" fill="url(#sph)"/></svg>
<div class="t" style="left:1946px;top:832px;color:#222">Continuous</div>
<div class="t" style="left:1584px;top:858px;font-size:18.300px;color:#222">Layer 01</div>
<div class="a" style="left:1692px;top:856px;width:22px;height:22px;border-radius:50%;background:#fff;border:1px solid #cfcfcf"></div>
<svg style="left:1730px;top:855px" width="22" height="26" viewBox="0 0 22 26"><g><path d="M11 1C5.500 1 1.500 4.600 1.500 9.200c0 3 1.900 4.800 3.600 6.800 1 1.200 1.700 2.300 1.900 3.500h8c.2-1.200.9-2.300 1.900-3.500 1.700-2 3.600-3.800 3.600-6.800C20.500 4.600 16.500 1 11 1z" fill="url(#bulbg)"/><rect x="7.300" y="19.500" width="7.400" height="2.500" fill="#c9c9c9"/><ellipse cx="11" cy="23" rx="3" ry="2.300" fill="#b9bcc4"/><ellipse cx="10.300" cy="22.600" rx="1.200" ry=".9" fill="#f2f2f2"/></g></svg>
<svg style="left:1786px;top:854px" width="26" height="26" viewBox="0 0 26 26"><g><path d="M12.500 12V7.500q0-4.500 4.500-4.500t4.500 4.500V9" fill="none" stroke="#bdbdbd" stroke-width="2.600"/><rect x="2" y="12" width="15" height="11.500" rx="1.500" fill="url(#lk)"/><path d="M2 16h15M2 19.500h15" stroke="#a8600e" stroke-width=".8" opacity=".6"/></g></svg>
<div class="a" style="left:1854px;top:856px;width:23px;height:23px;background:#e8472b;border:2px solid #141414"></div>
<svg style="left:1905px;top:857px" width="20" height="20" viewBox="0 0 20 20"><circle cx="10" cy="10" r="8.500" fill="url(#sph)"/></svg>
<div class="t" style="left:1946px;top:859px;color:#222">Continuous</div>
<div class="t" style="left:1584px;top:886px;font-size:18.300px;color:#222">Layer 02</div>
<div class="a" style="left:1692px;top:884px;width:22px;height:22px;border-radius:50%;background:#fff;border:1px solid #cfcfcf"></div>
<svg style="left:1730px;top:883px" width="22" height="26" viewBox="0 0 22 26"><g><path d="M11 1C5.500 1 1.500 4.600 1.500 9.200c0 3 1.900 4.800 3.600 6.800 1 1.200 1.700 2.300 1.900 3.500h8c.2-1.200.9-2.300 1.900-3.500 1.700-2 3.600-3.800 3.600-6.800C20.500 4.600 16.500 1 11 1z" fill="url(#bulbg)"/><rect x="7.300" y="19.500" width="7.400" height="2.500" fill="#c9c9c9"/><ellipse cx="11" cy="23" rx="3" ry="2.300" fill="#b9bcc4"/><ellipse cx="10.300" cy="22.600" rx="1.200" ry=".9" fill="#f2f2f2"/></g></svg>
<svg style="left:1786px;top:882px" width="26" height="26" viewBox="0 0 26 26"><g><path d="M12.500 12V7.500q0-4.500 4.500-4.500t4.500 4.500V9" fill="none" stroke="#bdbdbd" stroke-width="2.600"/><rect x="2" y="12" width="15" height="11.500" rx="1.500" fill="url(#lk)"/><path d="M2 16h15M2 19.500h15" stroke="#a8600e" stroke-width=".8" opacity=".6"/></g></svg>
<div class="a" style="left:1854px;top:884px;width:23px;height:23px;background:#9b5fd6;border:2px solid #141414"></div>
<svg style="left:1905px;top:885px" width="20" height="20" viewBox="0 0 20 20"><circle cx="10" cy="10" r="8.500" fill="url(#sph)"/></svg>
<div class="t" style="left:1946px;top:887px;color:#222">Continuous</div>
<div class="t" style="left:1584px;top:913px;font-size:18.300px;color:#222">Layer 03</div>
<div class="a" style="left:1692px;top:911px;width:22px;height:22px;border-radius:50%;background:#fff;border:1px solid #cfcfcf"></div>
<svg style="left:1730px;top:910px" width="22" height="26" viewBox="0 0 22 26"><g><path d="M11 1C5.500 1 1.500 4.600 1.500 9.200c0 3 1.900 4.800 3.600 6.800 1 1.200 1.700 2.300 1.900 3.500h8c.2-1.200.9-2.300 1.900-3.500 1.700-2 3.600-3.800 3.600-6.800C20.500 4.600 16.500 1 11 1z" fill="url(#bulbg)"/><rect x="7.300" y="19.500" width="7.400" height="2.500" fill="#c9c9c9"/><ellipse cx="11" cy="23" rx="3" ry="2.300" fill="#b9bcc4"/><ellipse cx="10.300" cy="22.600" rx="1.200" ry=".9" fill="#f2f2f2"/></g></svg>
<svg style="left:1786px;top:909px" width="26" height="26" viewBox="0 0 26 26"><g><path d="M12.500 12V7.500q0-4.500 4.500-4.500t4.500 4.500V9" fill="none" stroke="#bdbdbd" stroke-width="2.600"/><rect x="2" y="12" width="15" height="11.500" rx="1.500" fill="url(#lk)"/><path d="M2 16h15M2 19.500h15" stroke="#a8600e" stroke-width=".8" opacity=".6"/></g></svg>
<div class="a" style="left:1854px;top:911px;width:23px;height:23px;background:#1f49ee;border:2px solid #141414"></div>
<svg style="left:1905px;top:912px" width="20" height="20" viewBox="0 0 20 20"><circle cx="10" cy="10" r="8.500" fill="url(#sph)"/></svg>
<div class="t" style="left:1946px;top:914px;color:#222">Continuous</div>
<div class="t" style="left:1584px;top:940px;font-size:18.300px;color:#222">Layer 04</div>
<div class="a" style="left:1692px;top:938px;width:22px;height:22px;border-radius:50%;background:#fff;border:1px solid #cfcfcf"></div>
<svg style="left:1730px;top:937px" width="22" height="26" viewBox="0 0 22 26"><g><path d="M11 1C5.500 1 1.500 4.600 1.500 9.200c0 3 1.900 4.800 3.600 6.800 1 1.200 1.700 2.300 1.900 3.500h8c.2-1.200.9-2.300 1.900-3.500 1.700-2 3.600-3.800 3.600-6.800C20.500 4.600 16.500 1 11 1z" fill="url(#bulbg)"/><rect x="7.300" y="19.500" width="7.400" height="2.500" fill="#c9c9c9"/><ellipse cx="11" cy="23" rx="3" ry="2.300" fill="#b9bcc4"/><ellipse cx="10.300" cy="22.600" rx="1.200" ry=".9" fill="#f2f2f2"/></g></svg>
<svg style="left:1786px;top:936px" width="26" height="26" viewBox="0 0 26 26"><g><path d="M12.500 12V7.500q0-4.500 4.500-4.500t4.500 4.500V9" fill="none" stroke="#bdbdbd" stroke-width="2.600"/><rect x="2" y="12" width="15" height="11.500" rx="1.500" fill="url(#lk)"/><path d="M2 16h15M2 19.500h15" stroke="#a8600e" stroke-width=".8" opacity=".6"/></g></svg>
<div class="a" style="left:1854px;top:938px;width:23px;height:23px;background:#2f7d1f;border:2px solid #141414"></div>
<svg style="left:1905px;top:939px" width="20" height="20" viewBox="0 0 20 20"><circle cx="10" cy="10" r="8.500" fill="url(#sph)"/></svg>
<div class="t" style="left:1946px;top:941px;color:#222">Continuous</div>
<div class="t" style="left:1584px;top:968px;font-size:18.300px;color:#222">Layer 05</div>
<div class="a" style="left:1692px;top:966px;width:22px;height:22px;border-radius:50%;background:#fff;border:1px solid #cfcfcf"></div>
<svg style="left:1730px;top:965px" width="22" height="26" viewBox="0 0 22 26"><g><path d="M11 1C5.500 1 1.500 4.600 1.500 9.200c0 3 1.900 4.800 3.600 6.800 1 1.200 1.700 2.300 1.900 3.500h8c.2-1.200.9-2.300 1.900-3.500 1.700-2 3.600-3.800 3.600-6.800C20.500 4.600 16.500 1 11 1z" fill="url(#bulbg)"/><rect x="7.300" y="19.500" width="7.400" height="2.500" fill="#c9c9c9"/><ellipse cx="11" cy="23" rx="3" ry="2.300" fill="#b9bcc4"/><ellipse cx="10.300" cy="22.600" rx="1.200" ry=".9" fill="#f2f2f2"/></g></svg>
<svg style="left:1786px;top:964px" width="26" height="26" viewBox="0 0 26 26"><g><path d="M12.500 12V7.500q0-4.500 4.500-4.500t4.500 4.500V9" fill="none" stroke="#bdbdbd" stroke-width="2.600"/><rect x="2" y="12" width="15" height="11.500" rx="1.500" fill="url(#lk)"/><path d="M2 16h15M2 19.500h15" stroke="#a8600e" stroke-width=".8" opacity=".6"/></g></svg>
<div class="a" style="left:1854px;top:966px;width:23px;height:23px;background:#fff;border:2px solid #141414"></div>
<svg style="left:1905px;top:967px" width="20" height="20" viewBox="0 0 20 20"><circle cx="10" cy="10" r="8.500" fill="url(#sph)"/></svg>
<div class="t" style="left:1946px;top:969px;color:#222">Continuous</div>
<div class="a" style="left:1554px;top:1036px;width:494px;height:1px;background:#e2e2e2"></div>
<div class="a" style="left:1554px;top:1037px;width:494px;height:20px;background:#fafafa"></div>
<div class="a" style="left:1559px;top:1041px;width:408px;height:12px;background:#c2c2c2;border-radius:6px"></div>
<div class="a" style="left:1554px;top:1057px;width:494px;height:1px;background:#dcdcdc"></div>
<div class="a" style="left:1554px;top:1058px;width:494px;height:54px;background:#eeeeee"></div>
<div class="a" style="left:1583px;top:1070px;width:70px;height:28px;background:#fbfbfb;border-radius:5px;box-shadow:0 0 0 1px rgba(0,0,0,.04),0 1px 1px rgba(0,0,0,.12)"></div>
<div class="a" style="left:1618px;top:1070px;width:1px;height:28px;background:#e2e2e2"></div>
<svg style="left:1583px;top:1070px" width="70" height="28" viewBox="0 0 70 28"><path d="M9.500 14.500h17M18 6v17" stroke="#444" stroke-width="1.400" fill="none"/><path d="M45 14.500h17" stroke="#cfcfcf" stroke-width="1.400"/></svg>
<div class="a" style="left:1678px;top:1070px;width:58px;height:28px;background:#fbfbfb;border-radius:5px;box-shadow:0 0 0 1px rgba(0,0,0,.04),0 1px 1px rgba(0,0,0,.12)"></div>
<svg style="left:1678px;top:1070px" width="58" height="28" viewBox="0 0 58 28"><g transform="translate(19.500 14.500)"><g stroke="#333" stroke-width="3.200"><path d="M0-8.500V8.500M-8.500 0H8.500M-6-6L6 6M-6 6L6-6"/></g><circle r="5.500" fill="#333"/><circle r="2.300" fill="#fbfbfb"/></g><path d="M40 12l5 5 5-5" fill="none" stroke="#333" stroke-width="1.600"/></svg>
<!-- STATUS BAR -->
<div class="a" style="left:0;top:1111px;width:2048px;height:41px;background:linear-gradient(#e4e4e4,#cfcfcf);border-top:1px solid #c2c2c2"></div>
<svg style="left:6px;top:1124px" width="24" height="22" viewBox="0 0 24 22"><g stroke="#777" stroke-width="1.400"><path d="M1 2h22M1 7h22M1 12h22M1 17h22"/></g></svg>
<div class="t" style="left:34px;top:1126px;color:#1c1c1c">1 curve added to selection.</div>
<div class="a" style="left:1350px;top:1122px;width:112px;height:26px;border:1px solid #a0a0a0;border-radius:6px;background:linear-gradient(#ececec,#dadada)"></div>
<div class="t" style="left:1360px;top:1126px;color:#2a2a2a">CPlane</div>
<svg style="left:1440px;top:1126px" width="14" height="20" viewBox="0 0 14 20"><g fill="none" stroke="#555" stroke-width="1.500" stroke-linecap="round" stroke-linejoin="round"><path d="M3.500 7.500L7 4l3.500 3.500M3.500 12.500L7 16l3.500-3.500"/></g></svg>
<div class="t" style="left:1484px;top:1126px;color:#1c1c1c;letter-spacing:-.4px;word-spacing:-1.2px">X: 6.154</div>
<div class="t" style="left:1616px;top:1126px;color:#1c1c1c;letter-spacing:-.4px;word-spacing:-1.2px">Y: 24.554</div>
<div class="t" style="left:1752px;top:1126px;color:#1c1c1c;letter-spacing:-.4px;word-spacing:-1.2px">Z: 0.000</div>
</body></html>
